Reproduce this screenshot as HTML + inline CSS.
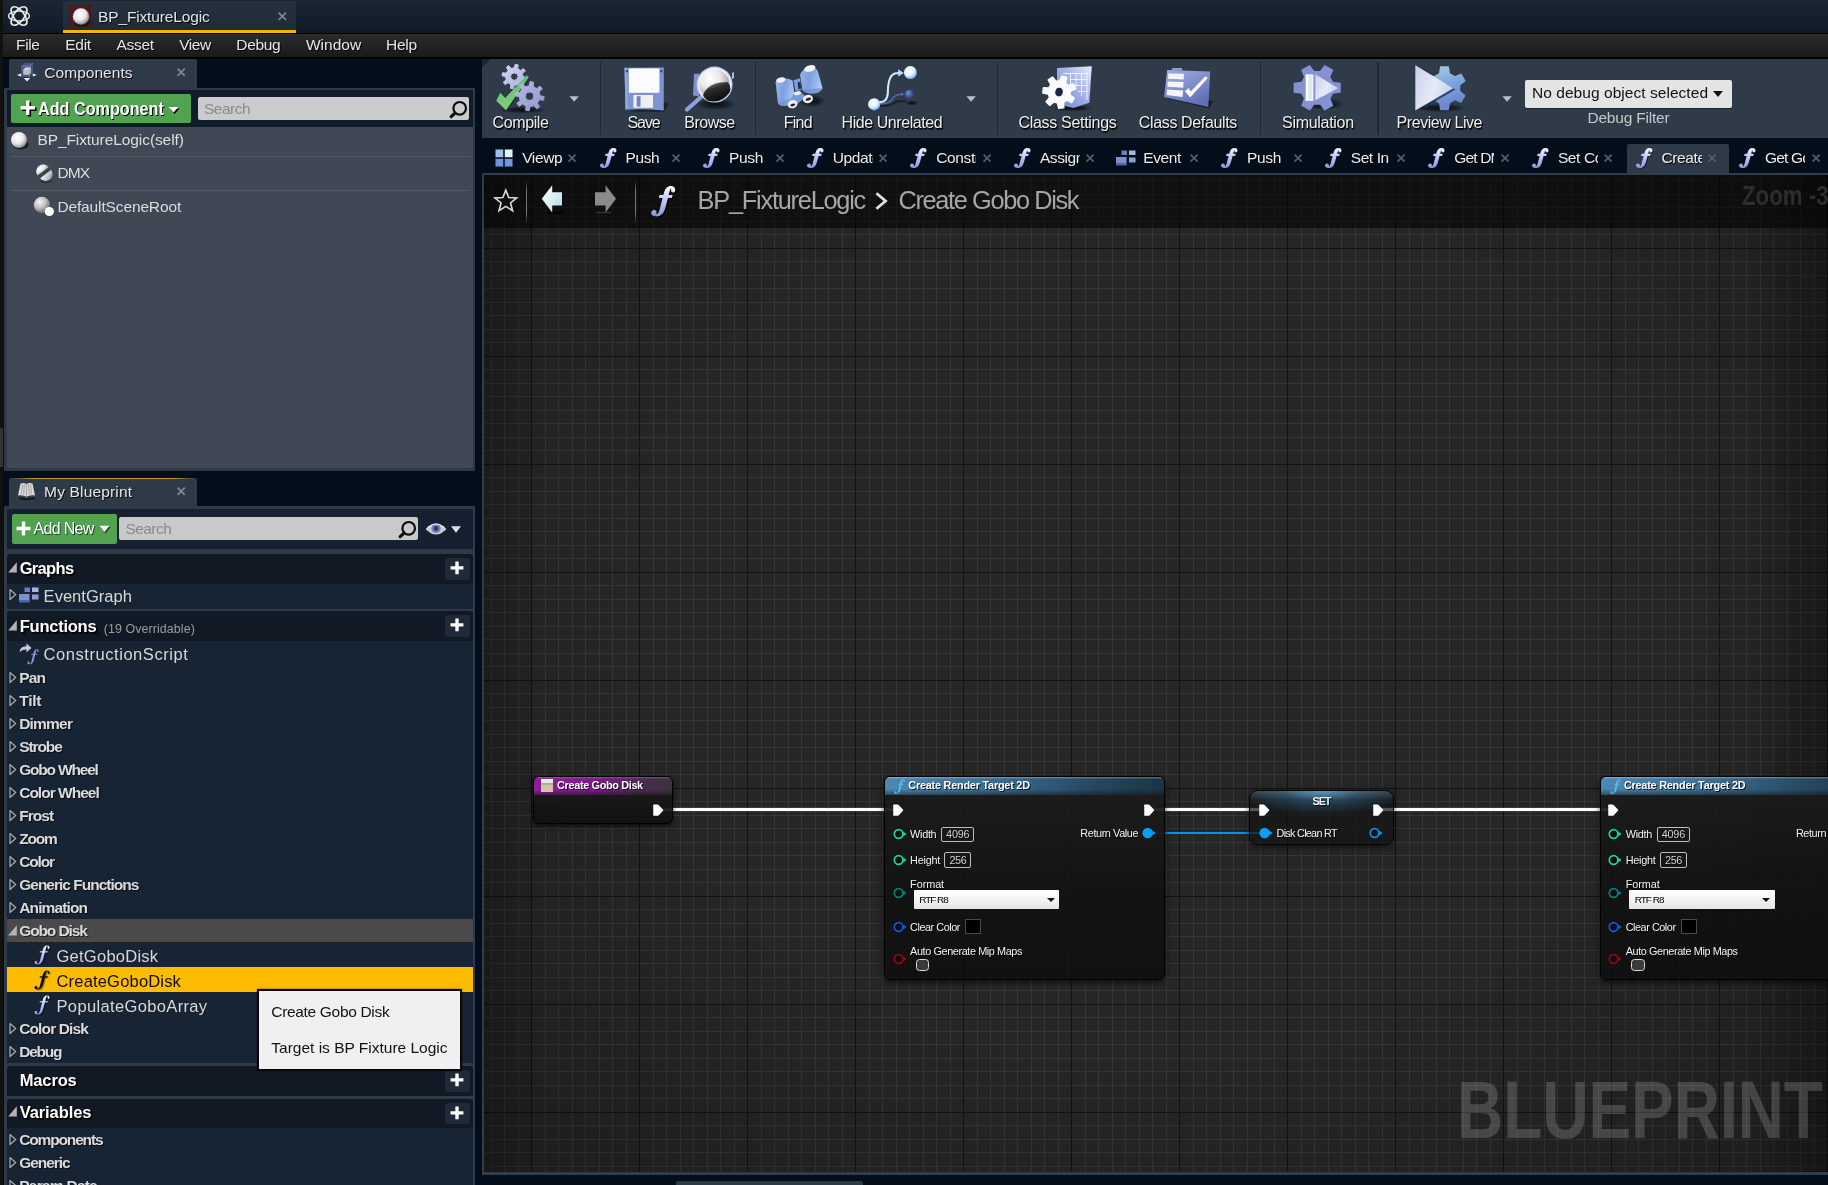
<!DOCTYPE html>
<html><head><meta charset="utf-8"><title>BP_FixtureLogic</title>
<style>
html,body{margin:0;padding:0;}
body{width:1828px;height:1185px;overflow:hidden;position:relative;background:#030e1a;font-family:"Liberation Sans",sans-serif;}
body div,body span,body svg{position:absolute;box-sizing:border-box;}
span{white-space:pre;}
svg{overflow:visible;}
</style></head><body>
<div id="root" style="left:0;top:0;width:1828px;height:1185px;will-change:transform;">
<div style="left:0px;top:0px;width:3px;height:1185px;background:#111;"></div>
<div style="left:0px;top:428px;width:3px;height:39px;background:#333;"></div>
<div style="left:3px;top:0px;width:1825px;height:33px;background:linear-gradient(#1b2632,#111b27);"></div>
<div style="left:63px;top:1px;width:233px;height:32px;background:linear-gradient(#25313d,#1f2b38);border-bottom:3px solid #f7b500;border-radius:2px 2px 0 0;"></div>
<div style="left:3px;top:33px;width:1825px;height:25.5px;background:linear-gradient(#2b2b2b,#1a1a1a);border-top:1px solid #000;border-bottom:2px solid #000;"></div>
<svg width="0" height="0" style="left:0;top:0"><defs><linearGradient id="fgm" gradientUnits="userSpaceOnUse" x1="0" y1="0" x2="0" y2="21"><stop offset="0" stop-color="#ffffff"/><stop offset=".4" stop-color="#c6cffa"/><stop offset="1" stop-color="#8797e2"/></linearGradient></defs></svg>
<svg style="left:6px;top:3px" width="26" height="26" viewBox="0 0 26 26" fill="none" stroke="#e8e8e8" stroke-width="1.7">
<ellipse cx="13" cy="13" rx="5.2" ry="11" transform="rotate(-38 13 13)"/>
<ellipse cx="13" cy="13" rx="5.2" ry="11" transform="rotate(38 13 13)"/>
<ellipse cx="13" cy="13" rx="10.5" ry="5" stroke-width="1.3"/>
</svg>
<div style="left:69px;top:5px;width:23px;height:23px;background:#4a1a1f;"></div>
<svg style="left:69px;top:5px" width="23" height="23" viewBox="0 0 23 23">
<defs><radialGradient id="sph" cx="40%" cy="35%" r="65%"><stop offset="0" stop-color="#fff"/><stop offset=".6" stop-color="#e6e6e6"/><stop offset="1" stop-color="#8a8a8a"/></radialGradient></defs>
<ellipse cx="13" cy="17.5" rx="8" ry="4.5" fill="#1a1a1a"/>
<circle cx="12" cy="11.5" r="8.2" fill="url(#sph)"/></svg>
<span style="left:98.0px;top:6.0px;font-size:15.52px;line-height:22px;color:#e4e4e4;letter-spacing:-0.15px;text-shadow:1px 1px 0 rgba(0,0,0,.85);">BP_FixtureLogic</span>
<svg style="left:277.8px;top:11.9px" width="8.6" height="8.6" viewBox="0 0 8.6 8.6"><path d="M.6 .6L8.0 8.0M8.0 .6L.6 8.0" stroke="#7f8994" stroke-width="1.7" fill="none"/></svg>
<span style="left:16.1px;top:34.0px;font-size:15.52px;line-height:22px;color:#e6e6e6;letter-spacing:-0.43px;text-shadow:1px 1px 0 rgba(0,0,0,.85);">File</span>
<span style="left:65.3px;top:34.0px;font-size:15.52px;line-height:22px;color:#e6e6e6;letter-spacing:-0.31px;text-shadow:1px 1px 0 rgba(0,0,0,.85);">Edit</span>
<span style="left:116.5px;top:34.0px;font-size:15.52px;line-height:22px;color:#e6e6e6;letter-spacing:-0.30px;text-shadow:1px 1px 0 rgba(0,0,0,.85);">Asset</span>
<span style="left:179.2px;top:34.0px;font-size:15.52px;line-height:22px;color:#e6e6e6;letter-spacing:-0.42px;text-shadow:1px 1px 0 rgba(0,0,0,.85);">View</span>
<span style="left:236.3px;top:34.0px;font-size:15.52px;line-height:22px;color:#e6e6e6;letter-spacing:-0.35px;text-shadow:1px 1px 0 rgba(0,0,0,.85);">Debug</span>
<span style="left:305.9px;top:34.0px;font-size:15.52px;line-height:22px;color:#e6e6e6;letter-spacing:0.03px;text-shadow:1px 1px 0 rgba(0,0,0,.85);">Window</span>
<span style="left:386.0px;top:34.0px;font-size:15.52px;line-height:22px;color:#e6e6e6;letter-spacing:-0.23px;text-shadow:1px 1px 0 rgba(0,0,0,.85);">Help</span>
<div style="left:9px;top:59px;width:188px;height:30px;background:#2e3a48;border-radius:2px 2px 0 0;"></div>
<div style="left:4px;top:88px;width:471px;height:383px;background:#2e3a48;"></div>
<div style="left:7px;top:90px;width:466px;height:37px;background:#101c2a;"></div>
<div style="left:7px;top:127px;width:466px;height:341px;background:#3f4854;border-radius:0 0 3px 3px;"></div>
<svg style="left:16px;top:61px" width="22" height="22" viewBox="16 61 22 22">
<path d="M21 66.2 L24.5 63 H33 V73.5 L29.5 77 H21z" fill="#4f6296" opacity=".75"/><path d="M21 66.2 H29.5 V77 M29.5 66.2 L33 63" stroke="#7f93cc" stroke-width=".8" fill="none" opacity=".8"/>
<path d="M23.5 69.5 L25.5 67.6 H30.8 V72.6 L28.8 74.5 H23.5z" fill="#d9d9d9"/><path d="M23.5 69.5 H28.8 V74.5 H23.5z" fill="#bdbdbd"/><path d="M28.8 69.5 L30.8 67.6 V72.6 L28.8 74.5z" fill="#9fb4b8"/>
<path d="M17 75 L21 73.6 V76.4z M36.8 75 L32.8 73.6 V76.4z M23.8 78 H30.2 L27 81.4z" fill="#f2f2f2"/></svg>
<span style="left:44.3px;top:62.0px;font-size:15.52px;line-height:22px;color:#e6e6e6;letter-spacing:0.03px;text-shadow:1px 1px 0 rgba(0,0,0,.85);">Components</span>
<svg style="left:176.8px;top:68.2px" width="8.4" height="8.4" viewBox="0 0 8.4 8.4"><path d="M.6 .6L7.800000000000001 7.800000000000001M7.800000000000001 .6L.6 7.800000000000001" stroke="#7f8994" stroke-width="1.7" fill="none"/></svg>
<div style="left:11px;top:94px;width:180px;height:29px;background:#51a351;border-radius:2px;"></div>
<span style="left:38.0px;top:96.0px;font-size:18.63px;line-height:26px;color:#fff;font-weight:bold;transform:scaleX(0.8697);transform-origin:0 50%;text-shadow:1px 1px 0 #000;">Add Component</span>
<svg style="left:20.4px;top:100.2px" width="16.6" height="16.6" viewBox="0 0 15 15"><path d="M6 1h3v5h5v3H9v5H6V9H1V6h5z" fill="#000" transform="translate(1,1)"/><path d="M5.5 .5h3v5h5v3h-5v5h-3v-5h-5v-3h5z" fill="#fff"/></svg>
<svg style="left:168px;top:106px" width="12" height="8" viewBox="0 0 12 8"><path d="M1.5 2.5h10l-5 5.5z" fill="#000"/><path d="M.5 1h10l-5 5.5z" fill="#fff"/></svg>
<div style="left:198px;top:97px;width:271px;height:23px;background:#cbcbcb;border-radius:2px;"></div>
<span style="left:204.0px;top:98.0px;font-size:15.52px;line-height:22px;color:#8a8a8a;letter-spacing:-0.53px;">Search</span>
<svg style="left:448px;top:99.5px" width="20" height="20" viewBox="0 0 20 20" fill="none" stroke="#0c0c0c"><circle cx="11.7" cy="8.3" r="6.3" stroke-width="2.2"/><path d="M7 13.1L3.2 16.6" stroke-width="3.2" stroke-linecap="round"/></svg>
<svg style="left:10px;top:131px" width="20" height="20" viewBox="0 0 20 20"><ellipse cx="10.5" cy="13.5" rx="8" ry="5" fill="#1c1c1c"/><circle cx="9" cy="9" r="8" fill="url(#sph)"/></svg>
<span style="left:37.4px;top:129.0px;font-size:15.52px;line-height:22px;color:#dcdcdc;letter-spacing:-0.09px;">BP_FixtureLogic(self)</span>
<div style="left:11px;top:156px;width:459px;height:1px;background:#55585c;"></div>
<div style="left:11px;top:190px;width:459px;height:1px;background:#55585c;"></div>
<svg style="left:30px;top:160px" width="26" height="26" viewBox="30 160 26 26">
<defs><linearGradient id="dmxb" x1="0" y1="0" x2="1" y2="1"><stop offset="0" stop-color="#f2f2f2"/><stop offset=".5" stop-color="#c9c9c9"/><stop offset="1" stop-color="#7d7d7d"/></linearGradient>
<radialGradient id="dmxa" cx="40%" cy="35%" r="70%"><stop offset="0" stop-color="#fff"/><stop offset=".7" stop-color="#e4e4e4"/><stop offset="1" stop-color="#b4b4b4"/></radialGradient></defs>
<ellipse cx="46" cy="181.6" rx="6" ry="1.6" fill="#2a2f37" opacity=".8"/>
<path d="M-6.9 0 A6.9 6.9 0 0 1 6.9 0z" transform="translate(43.1,171.4) rotate(-37)" fill="url(#dmxa)"/>
<path d="M-6.6 -.2 L6.6 -.2 L6.2 1.3 L-6 1.3z" transform="translate(43.9,172.5) rotate(-37)" fill="#3a4049"/>
<path d="M-6.9 0 A6.9 6.9 0 0 0 6.9 0z" transform="translate(45.7,174) rotate(-37)" fill="url(#dmxb)"/>
</svg>
<span style="left:57.4px;top:162.0px;font-size:15.52px;line-height:22px;color:#dcdcdc;letter-spacing:-0.86px;">DMX</span>
<svg style="left:33px;top:196px" width="22" height="21" viewBox="0 0 22 21">
<defs><radialGradient id="sph2" cx="35%" cy="30%" r="70%"><stop offset="0" stop-color="#f4f4f4"/><stop offset=".55" stop-color="#bdbdbd"/><stop offset="1" stop-color="#6a6a6a"/></radialGradient></defs>
<circle cx="9" cy="9" r="8.2" fill="url(#sph2)"/><circle cx="16.3" cy="15.5" r="4.6" fill="#fff"/></svg>
<span style="left:57.4px;top:196.0px;font-size:15.52px;line-height:22px;color:#dcdcdc;letter-spacing:-0.14px;">DefaultSceneRoot</span>
<div style="left:9px;top:478px;width:188px;height:29px;background:#2e3a48;border-radius:2px 2px 0 0;"></div>
<div style="left:11px;top:477.6px;width:184px;height:1.4px;background:linear-gradient(90deg,rgba(190,140,40,0),rgba(214,160,50,.9) 12%,rgba(214,160,50,.9) 88%,rgba(190,140,40,0));border-radius:2px;"></div>
<div style="left:4px;top:506px;width:471px;height:680px;background:#2e3a48;"></div>
<div style="left:7px;top:509px;width:466px;height:40px;background:#152130;"></div>
<svg style="left:17px;top:482px" width="19" height="18" viewBox="0 0 19 18">
<path d="M2.5 15.5 L9.5 16.8 L17.5 15.5 L17.5 17 L9.5 18 L2.5 17z" fill="#0a0a0a"/>
<path d="M1 13.5 L3.5 1.5 Q7 .2 9.5 2 Q12 .2 15.5 1.5 L18 13.5 Q13 12.5 9.5 14.8 Q6 12.5 1 13.5z" fill="#d9d9d9"/>
<path d="M9.5 2v12.5M5.5 2.2l-1.2 10M13.5 2.2l1.2 10M7.4 1.8l-.7 11M11.6 1.8l.7 11" stroke="#8c8c8c" stroke-width=".7" fill="none"/></svg>
<span style="left:44.1px;top:481.0px;font-size:15.52px;line-height:22px;color:#e6e6e6;letter-spacing:0.15px;text-shadow:1px 1px 0 rgba(0,0,0,.85);">My Blueprint</span>
<svg style="left:176.8px;top:487.4px" width="8.4" height="8.4" viewBox="0 0 8.4 8.4"><path d="M.6 .6L7.800000000000001 7.800000000000001M7.800000000000001 .6L.6 7.800000000000001" stroke="#7f8994" stroke-width="1.7" fill="none"/></svg>
<div style="left:12px;top:514px;width:105px;height:30px;background:#51a351;border-radius:2px;"></div>
<svg style="left:15.5px;top:521px" width="15" height="16" viewBox="0 0 15 16"><path d="M5.8 .5h3.4v5.3h5.3v3.4h-5.3v5.3h-3.4v-5.3h-5.3v-3.4h5.3z" fill="#fff"/></svg>
<span style="left:33.4px;top:517.0px;font-size:16.04px;line-height:22px;color:#fff;letter-spacing:-0.67px;text-shadow:1px 1px 0 rgba(0,0,0,.6);">Add New</span>
<svg style="left:98.5px;top:525px" width="12" height="9" viewBox="0 0 12 9"><path d="M1.5 2h10l-5 6.5z" fill="#1d3d1d"/><path d="M.5 .8h10l-5 6.2z" fill="#fff"/></svg>
<div style="left:119px;top:517px;width:299px;height:23px;background:#c9c9c9;border-radius:2px;"></div>
<span style="left:125.5px;top:518.0px;font-size:15.52px;line-height:22px;color:#8a8a8a;letter-spacing:-0.58px;">Search</span>
<svg style="left:397px;top:519.5px" width="20" height="20" viewBox="0 0 20 20" fill="none" stroke="#0c0c0c"><circle cx="11.7" cy="8.3" r="6.3" stroke-width="2.2"/><path d="M7 13.1L3.2 16.6" stroke-width="3.2" stroke-linecap="round"/></svg>
<svg style="left:425px;top:522px" width="22" height="14" viewBox="0 0 22 14"><path d="M.5 7 Q11 -4 21.5 7 Q11 18 .5 7z" fill="#c8ccd4"/><circle cx="11" cy="6.5" r="4.6" fill="#6f7fb8"/><circle cx="11" cy="6.5" r="2.2" fill="#2c3558"/><path d="M3 5.5Q11 -1.5 19 5.5" stroke="#eef0f5" stroke-width="1.2" fill="none"/></svg>
<svg style="left:451px;top:525.5px" width="10" height="7" viewBox="0 0 10 7"><path d="M0 .2h10l-5 6.5z" fill="#e0e0e0"/></svg>
<div style="left:7px;top:584px;width:466px;height:25px;background:#172433;"></div>
<div style="left:7px;top:641px;width:466px;height:422px;background:#172433;"></div>
<div style="left:7px;top:1128px;width:466px;height:57px;background:#172433;"></div>
<div style="left:7px;top:554px;width:466px;height:30px;background:#111a24;border-radius:3px 3px 0 0;"></div>
<svg style="left:8px;top:561.6px" width="9" height="11" viewBox="0 0 9 11"><path d="M8.8 .3V10.5H.2z" fill="#b4b4b4"/></svg>
<span style="left:19.7px;top:557.0px;font-size:16.56px;line-height:23px;color:#fff;font-weight:bold;letter-spacing:-0.70px;text-shadow:1px 1px 0 #000, 2px 2px 1px rgba(0,0,0,.7);">Graphs</span>
<div style="left:445px;top:558px;width:25px;height:22px;background:#1f2a36;border-radius:3px;"></div>
<svg style="left:450px;top:561.0px" width="14" height="13.8" viewBox="0 0 14 14"><path d="M5.3 .5h3.4v4.8h4.8v3.4h-4.8v4.8h-3.4v-4.8h-4.8v-3.4h4.8z" fill="#fff"/></svg>
<div style="left:7px;top:611px;width:466px;height:30px;background:#111a24;border-radius:3px 3px 0 0;"></div>
<svg style="left:8px;top:619.8px" width="9" height="11" viewBox="0 0 9 11"><path d="M8.8 .3V10.5H.2z" fill="#b4b4b4"/></svg>
<span style="left:19.7px;top:615.0px;font-size:16.56px;line-height:23px;color:#fff;font-weight:bold;letter-spacing:-0.26px;text-shadow:1px 1px 0 #000, 2px 2px 1px rgba(0,0,0,.7);">Functions</span>
<div style="left:445px;top:615px;width:25px;height:22px;background:#1f2a36;border-radius:3px;"></div>
<svg style="left:450px;top:618.0px" width="14" height="13.8" viewBox="0 0 14 14"><path d="M5.3 .5h3.4v4.8h4.8v3.4h-4.8v4.8h-3.4v-4.8h-4.8v-3.4h4.8z" fill="#fff"/></svg>
<span style="left:103.7px;top:621.0px;font-size:12.42px;line-height:17px;color:#9c9c9c;letter-spacing:0.10px;">(19 Overridable)</span>
<div style="left:7px;top:1066px;width:466px;height:30px;background:#111a24;border-radius:3px 3px 0 0;"></div>
<span style="left:19.7px;top:1069.0px;font-size:16.56px;line-height:23px;color:#fff;font-weight:bold;letter-spacing:-0.16px;text-shadow:1px 1px 0 #000, 2px 2px 1px rgba(0,0,0,.7);">Macros</span>
<div style="left:445px;top:1070px;width:25px;height:22px;background:#1f2a36;border-radius:3px;"></div>
<svg style="left:450px;top:1073.0px" width="14" height="13.8" viewBox="0 0 14 14"><path d="M5.3 .5h3.4v4.8h4.8v3.4h-4.8v4.8h-3.4v-4.8h-4.8v-3.4h4.8z" fill="#fff"/></svg>
<div style="left:7px;top:1099px;width:466px;height:29px;background:#111a24;border-radius:3px 3px 0 0;"></div>
<svg style="left:8px;top:1106.4px" width="9" height="11" viewBox="0 0 9 11"><path d="M8.8 .3V10.5H.2z" fill="#b4b4b4"/></svg>
<span style="left:19.7px;top:1101.0px;font-size:16.56px;line-height:23px;color:#fff;font-weight:bold;letter-spacing:-0.11px;text-shadow:1px 1px 0 #000, 2px 2px 1px rgba(0,0,0,.7);">Variables</span>
<div style="left:445px;top:1103px;width:25px;height:21px;background:#1f2a36;border-radius:3px;"></div>
<svg style="left:450px;top:1105.5px" width="14" height="13.8" viewBox="0 0 14 14"><path d="M5.3 .5h3.4v4.8h4.8v3.4h-4.8v4.8h-3.4v-4.8h-4.8v-3.4h4.8z" fill="#fff"/></svg>
<svg style="left:9px;top:589.0px" width="8" height="11" viewBox="0 0 8 11"><path d="M1 .5L6.7 5.5L1 10.5z" fill="none" stroke="#a8a8a8" stroke-width="1.25" stroke-linejoin="round"/></svg>
<svg style="left:19px;top:587px" width="20" height="16" viewBox="0 0 20 16"><rect x="5.5" y=".5" width="5.5" height="4.5" fill="#6d7fbf"/><rect x="13" y=".5" width="6.5" height="4.5" fill="#a9b6e0"/><rect x="0" y="7" width="10.5" height="8" fill="#7d8fd0"/><rect x="0" y="13" width="10.5" height="2.5" fill="#54649c"/><rect x="13" y="7.5" width="6.5" height="5" fill="#8d9dd6"/></svg>
<span style="left:43.6px;top:585.0px;font-size:16.56px;line-height:23px;color:#d8d8d8;letter-spacing:0.00px;">EventGraph</span>
<svg style="left:19px;top:643px" width="21" height="22" viewBox="0 0 21 22"><path d="M.5 9.5 Q1 3 7.5 3.2 V.5 L12.5 5 L7.5 9.2 V6.5 Q3 6.2 .5 9.5z" fill="#c7cbe0"/></svg>
<svg style="left:27.2px;top:648.5px" width="12" height="15.6" viewBox="0 0 16 21" preserveAspectRatio="none"><path d="M15.6 2.5 C15.6 1.2 14.5 .4 13.1 .4 C10.7 .4 9.5 2.2 8.8 5 L8.4 6.5 H5.9 L5.6 7.9 H8.1 L6 16.4 C5.5 18.4 4.8 19.6 3.7 19.6 C3.2 19.6 3 19.4 3 19.2 C3 18.9 3.3 18.7 3.3 18.1 C3.3 17.4 2.7 16.9 1.9 16.9 C1.1 16.9 .5 17.6 .5 18.5 C.5 19.8 1.8 20.6 3.6 20.6 C6.4 20.6 8.2 18.4 9.1 15 L10.9 7.9 H13.5 L13.8 6.5 H11.2 L11.5 5.3 C12 3.1 12.4 1.4 13.3 1.4 C13.7 1.4 13.8 1.6 13.8 1.8 C13.8 2.1 13.5 2.4 13.5 2.9 C13.5 3.6 14 4.1 14.6 4.1 C15.3 4.1 15.6 3.4 15.6 2.5z" fill="#8595de" stroke="#8595de" stroke-width="0" stroke-linejoin="round"/></svg>
<span style="left:43.6px;top:643.0px;font-size:16.56px;line-height:23px;color:#d8d8d8;letter-spacing:0.53px;">ConstructionScript</span>
<svg style="left:9px;top:671.6px" width="8" height="11" viewBox="0 0 8 11"><path d="M1 .5L6.7 5.5L1 10.5z" fill="none" stroke="#a8a8a8" stroke-width="1.25" stroke-linejoin="round"/></svg>
<span style="left:19.2px;top:667.0px;font-size:15.52px;line-height:22px;color:#dadada;font-weight:bold;letter-spacing:-0.82px;text-shadow:1px 1px 0 rgba(0,0,0,.6);">Pan</span>
<svg style="left:9px;top:694.6px" width="8" height="11" viewBox="0 0 8 11"><path d="M1 .5L6.7 5.5L1 10.5z" fill="none" stroke="#a8a8a8" stroke-width="1.25" stroke-linejoin="round"/></svg>
<span style="left:19.2px;top:690.0px;font-size:15.52px;line-height:22px;color:#dadada;font-weight:bold;letter-spacing:-0.25px;text-shadow:1px 1px 0 rgba(0,0,0,.6);">Tilt</span>
<svg style="left:9px;top:717.6px" width="8" height="11" viewBox="0 0 8 11"><path d="M1 .5L6.7 5.5L1 10.5z" fill="none" stroke="#a8a8a8" stroke-width="1.25" stroke-linejoin="round"/></svg>
<span style="left:19.2px;top:713.0px;font-size:15.52px;line-height:22px;color:#dadada;font-weight:bold;letter-spacing:-0.80px;text-shadow:1px 1px 0 rgba(0,0,0,.6);">Dimmer</span>
<svg style="left:9px;top:740.6px" width="8" height="11" viewBox="0 0 8 11"><path d="M1 .5L6.7 5.5L1 10.5z" fill="none" stroke="#a8a8a8" stroke-width="1.25" stroke-linejoin="round"/></svg>
<span style="left:19.2px;top:736.0px;font-size:15.52px;line-height:22px;color:#dadada;font-weight:bold;letter-spacing:-1.11px;text-shadow:1px 1px 0 rgba(0,0,0,.6);">Strobe</span>
<svg style="left:9px;top:763.6px" width="8" height="11" viewBox="0 0 8 11"><path d="M1 .5L6.7 5.5L1 10.5z" fill="none" stroke="#a8a8a8" stroke-width="1.25" stroke-linejoin="round"/></svg>
<span style="left:19.2px;top:759.0px;font-size:15.52px;line-height:22px;color:#dadada;font-weight:bold;letter-spacing:-1.20px;text-shadow:1px 1px 0 rgba(0,0,0,.6);">Gobo Wheel</span>
<svg style="left:9px;top:786.6px" width="8" height="11" viewBox="0 0 8 11"><path d="M1 .5L6.7 5.5L1 10.5z" fill="none" stroke="#a8a8a8" stroke-width="1.25" stroke-linejoin="round"/></svg>
<span style="left:19.2px;top:782.0px;font-size:15.52px;line-height:22px;color:#dadada;font-weight:bold;letter-spacing:-1.00px;text-shadow:1px 1px 0 rgba(0,0,0,.6);">Color Wheel</span>
<svg style="left:9px;top:809.6px" width="8" height="11" viewBox="0 0 8 11"><path d="M1 .5L6.7 5.5L1 10.5z" fill="none" stroke="#a8a8a8" stroke-width="1.25" stroke-linejoin="round"/></svg>
<span style="left:19.2px;top:805.0px;font-size:15.52px;line-height:22px;color:#dadada;font-weight:bold;letter-spacing:-0.94px;text-shadow:1px 1px 0 rgba(0,0,0,.6);">Frost</span>
<svg style="left:9px;top:832.6px" width="8" height="11" viewBox="0 0 8 11"><path d="M1 .5L6.7 5.5L1 10.5z" fill="none" stroke="#a8a8a8" stroke-width="1.25" stroke-linejoin="round"/></svg>
<span style="left:19.2px;top:828.0px;font-size:15.52px;line-height:22px;color:#dadada;font-weight:bold;letter-spacing:-1.24px;text-shadow:1px 1px 0 rgba(0,0,0,.6);">Zoom</span>
<svg style="left:9px;top:855.6px" width="8" height="11" viewBox="0 0 8 11"><path d="M1 .5L6.7 5.5L1 10.5z" fill="none" stroke="#a8a8a8" stroke-width="1.25" stroke-linejoin="round"/></svg>
<span style="left:19.2px;top:851.0px;font-size:15.52px;line-height:22px;color:#dadada;font-weight:bold;letter-spacing:-1.18px;text-shadow:1px 1px 0 rgba(0,0,0,.6);">Color</span>
<svg style="left:9px;top:878.6px" width="8" height="11" viewBox="0 0 8 11"><path d="M1 .5L6.7 5.5L1 10.5z" fill="none" stroke="#a8a8a8" stroke-width="1.25" stroke-linejoin="round"/></svg>
<span style="left:19.2px;top:874.0px;font-size:15.52px;line-height:22px;color:#dadada;font-weight:bold;letter-spacing:-1.00px;text-shadow:1px 1px 0 rgba(0,0,0,.6);">Generic Functions</span>
<svg style="left:9px;top:901.6px" width="8" height="11" viewBox="0 0 8 11"><path d="M1 .5L6.7 5.5L1 10.5z" fill="none" stroke="#a8a8a8" stroke-width="1.25" stroke-linejoin="round"/></svg>
<span style="left:19.2px;top:897.0px;font-size:15.52px;line-height:22px;color:#dadada;font-weight:bold;letter-spacing:-0.87px;text-shadow:1px 1px 0 rgba(0,0,0,.6);">Animation</span>
<div style="left:7px;top:919px;width:466px;height:23px;background:#4a4a4a;"></div>
<svg style="left:8px;top:924.6px" width="9" height="11" viewBox="0 0 9 11"><path d="M8.8 .3V10.5H.2z" fill="#b4b4b4"/></svg>
<span style="left:19.2px;top:920.0px;font-size:15.52px;line-height:22px;color:#dadada;font-weight:bold;letter-spacing:-1.12px;text-shadow:1px 1px 0 rgba(0,0,0,.6);">Gobo Disk</span>
<svg style="left:33.5px;top:945px" width="16" height="20" viewBox="0 0 16 21" preserveAspectRatio="none"><path d="M15.6 2.5 C15.6 1.2 14.5 .4 13.1 .4 C10.7 .4 9.5 2.2 8.8 5 L8.4 6.5 H5.9 L5.6 7.9 H8.1 L6 16.4 C5.5 18.4 4.8 19.6 3.7 19.6 C3.2 19.6 3 19.4 3 19.2 C3 18.9 3.3 18.7 3.3 18.1 C3.3 17.4 2.7 16.9 1.9 16.9 C1.1 16.9 .5 17.6 .5 18.5 C.5 19.8 1.8 20.6 3.6 20.6 C6.4 20.6 8.2 18.4 9.1 15 L10.9 7.9 H13.5 L13.8 6.5 H11.2 L11.5 5.3 C12 3.1 12.4 1.4 13.3 1.4 C13.7 1.4 13.8 1.6 13.8 1.8 C13.8 2.1 13.5 2.4 13.5 2.9 C13.5 3.6 14 4.1 14.6 4.1 C15.3 4.1 15.6 3.4 15.6 2.5z" fill="#0a101c" transform="translate(1.2,1)"/><path d="M15.6 2.5 C15.6 1.2 14.5 .4 13.1 .4 C10.7 .4 9.5 2.2 8.8 5 L8.4 6.5 H5.9 L5.6 7.9 H8.1 L6 16.4 C5.5 18.4 4.8 19.6 3.7 19.6 C3.2 19.6 3 19.4 3 19.2 C3 18.9 3.3 18.7 3.3 18.1 C3.3 17.4 2.7 16.9 1.9 16.9 C1.1 16.9 .5 17.6 .5 18.5 C.5 19.8 1.8 20.6 3.6 20.6 C6.4 20.6 8.2 18.4 9.1 15 L10.9 7.9 H13.5 L13.8 6.5 H11.2 L11.5 5.3 C12 3.1 12.4 1.4 13.3 1.4 C13.7 1.4 13.8 1.6 13.8 1.8 C13.8 2.1 13.5 2.4 13.5 2.9 C13.5 3.6 14 4.1 14.6 4.1 C15.3 4.1 15.6 3.4 15.6 2.5z" fill="url(#fgm)" stroke="url(#fgm)" stroke-width="0" stroke-linejoin="round"/></svg>
<span style="left:56.5px;top:945.0px;font-size:16.56px;line-height:23px;color:#d8d8d8;letter-spacing:0.23px;">GetGoboDisk</span>
<div style="left:7px;top:967px;width:466px;height:25px;background:#fdbc00;"></div>
<svg style="left:33.5px;top:970px" width="16" height="20" viewBox="0 0 16 21" preserveAspectRatio="none"><path d="M15.6 2.5 C15.6 1.2 14.5 .4 13.1 .4 C10.7 .4 9.5 2.2 8.8 5 L8.4 6.5 H5.9 L5.6 7.9 H8.1 L6 16.4 C5.5 18.4 4.8 19.6 3.7 19.6 C3.2 19.6 3 19.4 3 19.2 C3 18.9 3.3 18.7 3.3 18.1 C3.3 17.4 2.7 16.9 1.9 16.9 C1.1 16.9 .5 17.6 .5 18.5 C.5 19.8 1.8 20.6 3.6 20.6 C6.4 20.6 8.2 18.4 9.1 15 L10.9 7.9 H13.5 L13.8 6.5 H11.2 L11.5 5.3 C12 3.1 12.4 1.4 13.3 1.4 C13.7 1.4 13.8 1.6 13.8 1.8 C13.8 2.1 13.5 2.4 13.5 2.9 C13.5 3.6 14 4.1 14.6 4.1 C15.3 4.1 15.6 3.4 15.6 2.5z" fill="rgba(0,0,0,.3)" transform="translate(1.2,1)"/><path d="M15.6 2.5 C15.6 1.2 14.5 .4 13.1 .4 C10.7 .4 9.5 2.2 8.8 5 L8.4 6.5 H5.9 L5.6 7.9 H8.1 L6 16.4 C5.5 18.4 4.8 19.6 3.7 19.6 C3.2 19.6 3 19.4 3 19.2 C3 18.9 3.3 18.7 3.3 18.1 C3.3 17.4 2.7 16.9 1.9 16.9 C1.1 16.9 .5 17.6 .5 18.5 C.5 19.8 1.8 20.6 3.6 20.6 C6.4 20.6 8.2 18.4 9.1 15 L10.9 7.9 H13.5 L13.8 6.5 H11.2 L11.5 5.3 C12 3.1 12.4 1.4 13.3 1.4 C13.7 1.4 13.8 1.6 13.8 1.8 C13.8 2.1 13.5 2.4 13.5 2.9 C13.5 3.6 14 4.1 14.6 4.1 C15.3 4.1 15.6 3.4 15.6 2.5z" fill="#0a0a0a" stroke="#0a0a0a" stroke-width="0" stroke-linejoin="round"/></svg>
<span style="left:56.5px;top:970.0px;font-size:16.56px;line-height:23px;color:#0a0a0a;letter-spacing:0.16px;">CreateGoboDisk</span>
<svg style="left:33.5px;top:995px" width="16" height="20" viewBox="0 0 16 21" preserveAspectRatio="none"><path d="M15.6 2.5 C15.6 1.2 14.5 .4 13.1 .4 C10.7 .4 9.5 2.2 8.8 5 L8.4 6.5 H5.9 L5.6 7.9 H8.1 L6 16.4 C5.5 18.4 4.8 19.6 3.7 19.6 C3.2 19.6 3 19.4 3 19.2 C3 18.9 3.3 18.7 3.3 18.1 C3.3 17.4 2.7 16.9 1.9 16.9 C1.1 16.9 .5 17.6 .5 18.5 C.5 19.8 1.8 20.6 3.6 20.6 C6.4 20.6 8.2 18.4 9.1 15 L10.9 7.9 H13.5 L13.8 6.5 H11.2 L11.5 5.3 C12 3.1 12.4 1.4 13.3 1.4 C13.7 1.4 13.8 1.6 13.8 1.8 C13.8 2.1 13.5 2.4 13.5 2.9 C13.5 3.6 14 4.1 14.6 4.1 C15.3 4.1 15.6 3.4 15.6 2.5z" fill="#0a101c" transform="translate(1.2,1)"/><path d="M15.6 2.5 C15.6 1.2 14.5 .4 13.1 .4 C10.7 .4 9.5 2.2 8.8 5 L8.4 6.5 H5.9 L5.6 7.9 H8.1 L6 16.4 C5.5 18.4 4.8 19.6 3.7 19.6 C3.2 19.6 3 19.4 3 19.2 C3 18.9 3.3 18.7 3.3 18.1 C3.3 17.4 2.7 16.9 1.9 16.9 C1.1 16.9 .5 17.6 .5 18.5 C.5 19.8 1.8 20.6 3.6 20.6 C6.4 20.6 8.2 18.4 9.1 15 L10.9 7.9 H13.5 L13.8 6.5 H11.2 L11.5 5.3 C12 3.1 12.4 1.4 13.3 1.4 C13.7 1.4 13.8 1.6 13.8 1.8 C13.8 2.1 13.5 2.4 13.5 2.9 C13.5 3.6 14 4.1 14.6 4.1 C15.3 4.1 15.6 3.4 15.6 2.5z" fill="url(#fgm)" stroke="url(#fgm)" stroke-width="0" stroke-linejoin="round"/></svg>
<span style="left:56.5px;top:995.0px;font-size:16.56px;line-height:23px;color:#d8d8d8;letter-spacing:0.33px;">PopulateGoboArray</span>
<svg style="left:9px;top:1022.6px" width="8" height="11" viewBox="0 0 8 11"><path d="M1 .5L6.7 5.5L1 10.5z" fill="none" stroke="#a8a8a8" stroke-width="1.25" stroke-linejoin="round"/></svg>
<span style="left:19.2px;top:1018.0px;font-size:15.52px;line-height:22px;color:#dadada;font-weight:bold;letter-spacing:-0.88px;text-shadow:1px 1px 0 rgba(0,0,0,.6);">Color Disk</span>
<svg style="left:9px;top:1045.5px" width="8" height="11" viewBox="0 0 8 11"><path d="M1 .5L6.7 5.5L1 10.5z" fill="none" stroke="#a8a8a8" stroke-width="1.25" stroke-linejoin="round"/></svg>
<span style="left:19.2px;top:1041.0px;font-size:15.52px;line-height:22px;color:#dadada;font-weight:bold;letter-spacing:-1.26px;text-shadow:1px 1px 0 rgba(0,0,0,.6);">Debug</span>
<svg style="left:9px;top:1133.8px" width="8" height="11" viewBox="0 0 8 11"><path d="M1 .5L6.7 5.5L1 10.5z" fill="none" stroke="#a8a8a8" stroke-width="1.25" stroke-linejoin="round"/></svg>
<span style="left:19.2px;top:1129.0px;font-size:15.52px;line-height:22px;color:#dadada;font-weight:bold;letter-spacing:-1.16px;text-shadow:1px 1px 0 rgba(0,0,0,.6);">Components</span>
<svg style="left:9px;top:1156.7px" width="8" height="11" viewBox="0 0 8 11"><path d="M1 .5L6.7 5.5L1 10.5z" fill="none" stroke="#a8a8a8" stroke-width="1.25" stroke-linejoin="round"/></svg>
<span style="left:19.2px;top:1152.0px;font-size:15.52px;line-height:22px;color:#dadada;font-weight:bold;letter-spacing:-1.06px;text-shadow:1px 1px 0 rgba(0,0,0,.6);">Generic</span>
<svg style="left:9px;top:1179.6px" width="8" height="11" viewBox="0 0 8 11"><path d="M1 .5L6.7 5.5L1 10.5z" fill="none" stroke="#a8a8a8" stroke-width="1.25" stroke-linejoin="round"/></svg>
<span style="left:19.2px;top:1175.0px;font-size:15.52px;line-height:22px;color:#dadada;font-weight:bold;letter-spacing:-0.74px;text-shadow:1px 1px 0 rgba(0,0,0,.6);">Param Data</span>
<div style="left:257.2px;top:989.2px;width:204.8px;height:81.4px;background:#f0f0f0;border:2.3px solid #080808;box-shadow:0 0 2px rgba(0,0,0,.5);"></div>
<span style="left:271.3px;top:1001.0px;font-size:15.52px;line-height:22px;color:#121212;letter-spacing:-0.33px;">Create Gobo Disk</span>
<span style="left:271.3px;top:1037.0px;font-size:15.52px;line-height:22px;color:#121212;letter-spacing:-0.01px;">Target is BP Fixture Logic</span>
<div style="left:482px;top:59px;width:1346px;height:79px;background:#2f3b48;"></div>
<svg style="left:482px;top:59px" width="9" height="9" viewBox="0 0 9 9"><path d="M0 0H8.5L0 8.5z" fill="#1b2430"/></svg>
<div style="left:599.5px;top:62px;width:1.6px;height:73px;background:#23282e;"></div>
<div style="left:754.5px;top:62px;width:1.6px;height:73px;background:#23282e;"></div>
<div style="left:996.5px;top:62px;width:1.6px;height:73px;background:#23282e;"></div>
<div style="left:1259.5px;top:62px;width:1.6px;height:73px;background:#23282e;"></div>
<div style="left:1377.0px;top:62px;width:1.6px;height:73px;background:#23282e;"></div>
<span style="left:492.6px;top:111.0px;font-size:16.04px;line-height:22px;color:#ededed;letter-spacing:-0.43px;text-shadow:1px 1px 0 #000, 1px 2px 1px rgba(0,0,0,.7);">Compile</span>
<span style="left:627.5px;top:111.0px;font-size:16.04px;line-height:22px;color:#ededed;letter-spacing:-1.09px;text-shadow:1px 1px 0 #000, 1px 2px 1px rgba(0,0,0,.7);">Save</span>
<span style="left:684.3px;top:111.0px;font-size:16.04px;line-height:22px;color:#ededed;letter-spacing:-0.51px;text-shadow:1px 1px 0 #000, 1px 2px 1px rgba(0,0,0,.7);">Browse</span>
<span style="left:783.7px;top:111.0px;font-size:16.04px;line-height:22px;color:#ededed;letter-spacing:-0.75px;text-shadow:1px 1px 0 #000, 1px 2px 1px rgba(0,0,0,.7);">Find</span>
<span style="left:841.5px;top:111.0px;font-size:16.04px;line-height:22px;color:#ededed;letter-spacing:-0.44px;text-shadow:1px 1px 0 #000, 1px 2px 1px rgba(0,0,0,.7);">Hide Unrelated</span>
<span style="left:1018.5px;top:111.0px;font-size:16.04px;line-height:22px;color:#ededed;letter-spacing:-0.32px;text-shadow:1px 1px 0 #000, 1px 2px 1px rgba(0,0,0,.7);">Class Settings</span>
<span style="left:1138.8px;top:111.0px;font-size:16.04px;line-height:22px;color:#ededed;letter-spacing:-0.37px;text-shadow:1px 1px 0 #000, 1px 2px 1px rgba(0,0,0,.7);">Class Defaults</span>
<span style="left:1282.0px;top:111.0px;font-size:16.04px;line-height:22px;color:#ededed;letter-spacing:-0.31px;text-shadow:1px 1px 0 #000, 1px 2px 1px rgba(0,0,0,.7);">Simulation</span>
<span style="left:1396.5px;top:111.0px;font-size:16.04px;line-height:22px;color:#ededed;letter-spacing:-0.44px;text-shadow:1px 1px 0 #000, 1px 2px 1px rgba(0,0,0,.7);">Preview Live</span>
<svg style="left:568.8000000000001px;top:96.2px" width="10.3" height="6" viewBox="0 0 11 7"><path d="M0 .3H11L5.5 6.6z" fill="#b9bcc0"/></svg>
<svg style="left:966.0px;top:96.2px" width="10.3" height="6" viewBox="0 0 11 7"><path d="M0 .3H11L5.5 6.6z" fill="#b9bcc0"/></svg>
<svg style="left:1501.7px;top:96.2px" width="10.3" height="6" viewBox="0 0 11 7"><path d="M0 .3H11L5.5 6.6z" fill="#b9bcc0"/></svg>
<svg style="left:482px;top:59px" width="1346" height="79" viewBox="482 59 1346 79">
<defs>
<linearGradient id="gA" x1="0" y1="0" x2="1" y2="1"><stop offset="0" stop-color="#d3d6f4"/><stop offset="1" stop-color="#a9aedd"/></linearGradient>
<linearGradient id="gB" x1="0" y1="0" x2="1" y2="1"><stop offset="0" stop-color="#b4b9e4"/><stop offset="1" stop-color="#9097cc"/></linearGradient>
<linearGradient id="gChk" x1="0" y1="0" x2="0" y2="1"><stop offset="0" stop-color="#63bd6b"/><stop offset="1" stop-color="#7ccf7f"/></linearGradient>
<radialGradient id="shd"><stop offset="0" stop-color="#000" stop-opacity=".75"/><stop offset=".6" stop-color="#000" stop-opacity=".45"/><stop offset="1" stop-color="#000" stop-opacity="0"/></radialGradient>
<radialGradient id="lens" cx="35%" cy="28%" r="75%"><stop offset="0" stop-color="#fff"/><stop offset=".45" stop-color="#e9e9e9"/><stop offset="1" stop-color="#8e8e8e"/></radialGradient>
<radialGradient id="orb" cx="40%" cy="35%" r="65%"><stop offset="0" stop-color="#fff"/><stop offset=".6" stop-color="#e6f1ff"/><stop offset="1" stop-color="#6fa4ea"/></radialGradient>
<radialGradient id="orb2" cx="40%" cy="35%" r="65%"><stop offset="0" stop-color="#6f9a9a"/><stop offset=".5" stop-color="#3f66b0"/><stop offset="1" stop-color="#27407c"/></radialGradient>
<linearGradient id="sheet" x1="0" y1="1" x2="1" y2="0"><stop offset="0" stop-color="#6f80d0"/><stop offset=".6" stop-color="#a9b8ea"/><stop offset="1" stop-color="#e4eefb"/></linearGradient>
<linearGradient id="card" x1="0" y1="0" x2=".6" y2="1"><stop offset="0" stop-color="#a3afe4"/><stop offset="1" stop-color="#6070b4"/></linearGradient>
<linearGradient id="tri" x1="0" y1="0" x2="1" y2=".4"><stop offset="0" stop-color="#c9d0ec"/><stop offset=".6" stop-color="#e6eaf7"/><stop offset="1" stop-color="#c0d8ee"/></linearGradient>
<linearGradient id="pgear" x1="0" y1="0" x2=".3" y2="1"><stop offset="0" stop-color="#a5d3e4"/><stop offset=".5" stop-color="#7fa6dc"/><stop offset="1" stop-color="#6c86d0"/></linearGradient>
<linearGradient id="bino" x1="0" y1="0" x2="1" y2=".3"><stop offset="0" stop-color="#9db9ee"/><stop offset=".5" stop-color="#7f9fde"/><stop offset="1" stop-color="#a6c6f2"/></linearGradient>
</defs>
<ellipse cx="523" cy="110" rx="24" ry="3.2" fill="url(#shd)"/>
<path d="M523.1 76.6 L526.6 77.5 L526.0 80.5 L522.4 80.0 L520.5 82.8 L522.3 85.9 L519.8 87.6 L517.6 84.7 L514.3 85.4 L513.4 88.9 L510.4 88.3 L510.9 84.7 L508.1 82.8 L505.0 84.6 L503.3 82.1 L506.2 79.9 L505.5 76.6 L502.0 75.7 L502.6 72.7 L506.2 73.2 L508.1 70.4 L506.3 67.3 L508.8 65.6 L511.0 68.5 L514.3 67.8 L515.2 64.3 L518.2 64.9 L517.7 68.5 L520.5 70.4 L523.6 68.6 L525.3 71.1 L522.4 73.3z M510.6 76.6a3.7 3.7 0 1 0 7.4 0a3.7 3.7 0 1 0 -7.4 0z" fill="url(#gA)" fill-rule="evenodd" stroke="url(#gA)" stroke-width="1" stroke-linejoin="round"/>
<path d="M497.3 101.6 L501.3 93.6 L506.2 98.9 L527.8 76.1 L530 78 L507 111z" fill="#1c2630" opacity=".8"/>
<path d="M496.3 100.8 L500.3 92.8 L505.2 98.1 L526.8 75.3 L529 77.2 L506 110.2z" fill="url(#gChk)"/>
<path d="M540.0 95.7 L544.2 96.6 L543.6 100.2 L539.4 99.7 L537.3 103.2 L539.7 106.8 L536.7 108.9 L534.0 105.6 L530.1 106.6 L529.2 110.8 L525.6 110.2 L526.1 106.0 L522.6 103.9 L519.0 106.3 L516.9 103.3 L520.2 100.6 L519.2 96.7 L515.0 95.8 L515.6 92.2 L519.8 92.7 L521.9 89.2 L519.5 85.6 L522.5 83.5 L525.2 86.8 L529.1 85.8 L530.0 81.6 L533.6 82.2 L533.1 86.4 L536.6 88.5 L540.2 86.1 L542.3 89.1 L539.0 91.8z M525.5 96.2a4.1 4.1 0 1 0 8.2 0a4.1 4.1 0 1 0 -8.2 0z" fill="url(#gB)" fill-rule="evenodd" stroke="url(#gB)" stroke-width="1" stroke-linejoin="round"/>
<path d="M630 111.4 L664 111.8 L668.5 104 L664 102z" fill="#10161c" opacity=".7"/>
<path d="M624.5 67.8 L663.8 67.4 L663.8 110.6 Q644 108.6 625.5 109.6z" fill="#7e92d4"/>
<path d="M624.5 67.8 L627 67.8 L628 109.4 L625.5 109.6z" fill="#94a6e2"/>
<rect x="628.8" y="68.4" width="30.6" height="24.4" fill="#fbfbfb"/>
<rect x="633.4" y="95" width="19.6" height="12.8" fill="#efefef"/><rect x="636.7" y="96.2" width="3.8" height="10.4" fill="#6d82c8"/>
<rect x="625.8" y="70.3" width="2" height="2" fill="#2f3b5e"/><rect x="660.3" y="70.3" width="2" height="2" fill="#2f3b5e"/>
<ellipse cx="716" cy="104" rx="20" ry="6" fill="url(#shd)"/>
<path d="M694 74 L699 73.5 L699 96.5 L693 95.5z" fill="#7f91d2"/>
<path d="M732 73l2 -1 0 6 -2 1z" fill="#aebcea"/>
<path d="M700.5 97.5 L687 109.5" stroke="#8fa0dc" stroke-width="4.2" stroke-linecap="round"/>
<circle cx="714.6" cy="84.6" r="18" fill="#c3ccf2"/><circle cx="714.6" cy="84.6" r="16.6" fill="#f4f6ff"/><circle cx="714.6" cy="84.6" r="15.2" fill="url(#lens)"/>
<defs><linearGradient id="lensd" x1=".2" y1="0" x2=".7" y2="1"><stop offset="0" stop-color="#8a8a8a"/><stop offset=".35" stop-color="#2e2e2e"/><stop offset="1" stop-color="#050505"/></linearGradient></defs>
<path d="M703 95 Q708 82 727.5 82 Q732 87 729.5 92.5 Q722 103.5 709 101 Q704.5 99 703 95z" fill="url(#lensd)"/>
<ellipse cx="812" cy="101" rx="13" ry="6" fill="url(#shd)"/>
<path d="M775.6 82.6 Q776 79 780.5 78 Q788 77.6 792.6 80.6 L795 98.4 Q792 105.5 785 106 Q780 106 778 103.4z" fill="url(#bino)"/>
<path d="M778 103.4 Q784 99.5 795 98.4 Q792 105.5 785 106 Q780 106 778 103.4z" fill="#6f8fd2" opacity=".7"/>
<ellipse cx="780.8" cy="80" rx="4.6" ry="2.5" fill="#f2f4f8" transform="rotate(-14 780.8 80)"/>
<path d="M793.4 80.2 L800 78.2 L801.6 90 L795.4 91z" fill="#7f9de0"/>
<path d="M797.6 82.5 L800.4 81.8 L801.3 88.6 L798.4 89.2z" fill="#27323e"/>
<path d="M800 74.4 Q803 68.6 809 66.2 Q815 66 817.8 71 L822.6 88.4 Q819 93.6 811.6 93.6 Q805.5 93.4 802.6 90.6z" fill="url(#bino)"/>
<path d="M802.6 90.6 Q810 88 822.6 88.4 Q819 93.6 811.6 93.6 Q805.5 93.4 802.6 90.6z" fill="#6f8fd2" opacity=".7"/>
<ellipse cx="809.8" cy="68.4" rx="5.8" ry="3.1" fill="#f4f6fa" transform="rotate(-16 809.8 68.4)"/>
<path d="M794 93 L801 92 L806 97 L797 104 L790 100z" fill="#7a99dc"/>
<ellipse cx="797.4" cy="93.2" rx="3.6" ry="2" fill="#e6eaf2" transform="rotate(-12 797.4 93.2)"/>
<ellipse cx="792.6" cy="104.2" rx="4.9" ry="4.1" fill="#eef0f4" transform="rotate(-15 792.6 104.2)"/><ellipse cx="792.8" cy="104.9" rx="2.6" ry="1.3" fill="#1f2638" transform="rotate(-15 792.8 104.9)"/>
<ellipse cx="807.9" cy="99" rx="5.1" ry="4.2" fill="#eef0f4" transform="rotate(-15 807.9 99)"/><ellipse cx="808.3" cy="99.2" rx="2.8" ry="1.4" fill="#1f2638" transform="rotate(-15 808.3 99.2)"/>
<ellipse cx="912" cy="103" rx="6" ry="2.6" fill="url(#shd)"/><path d="M880 106 Q890 106 894 103 T906 101.5" stroke="#0e141c" stroke-width="2" fill="none" opacity=".7"/>
<path d="M880 103.5 Q890 104 892.5 98.5 Q895 94 903 94.2" stroke="#4a6db4" stroke-width="1.6" fill="none"/><path d="M901 92.2l3.6 2-3.6 2z" fill="#4a6db4"/>
<circle cx="909.3" cy="94.3" r="4.5" fill="url(#orb2)"/>
<path d="M879 102 Q887 103 887.8 93 Q888 74 896 73.2 L901 73" stroke="#d4ebff" stroke-width="2.1" fill="none" stroke-linecap="round"/><path d="M898.2 69.3l5.6 3.6-5.6 3.6z" fill="#b8dcfb"/>
<circle cx="910.4" cy="72.6" r="6.5" fill="url(#orb)"/><circle cx="874.2" cy="104.3" r="6.1" fill="url(#orb)"/>
<ellipse cx="1072" cy="108" rx="20" ry="3.5" fill="url(#shd)"/>
<path d="M1057 68 L1091.8 66.3 L1089.3 102.7 L1073.5 108 L1057 104z" fill="url(#sheet)"/>
<path d="M1063 73.5H1087M1070 79.5H1087M1074 85.5H1087M1078 91.5H1087M1087 72V100M1081.5 73V96M1076 73V90M1070.5 73V84" stroke="#f3f7ff" stroke-width="1" fill="none" opacity=".9"/>
<path d="M1068.3 85.4 L1073.5 84.0 L1075.3 88.9 L1070.4 91.2 L1070.0 95.0 L1074.4 98.2 L1071.6 102.7 L1066.8 100.2 L1063.6 102.3 L1063.8 107.7 L1058.6 108.4 L1057.5 103.1 L1053.9 101.9 L1049.8 105.4 L1046.0 101.8 L1049.5 97.6 L1048.2 94.0 L1042.8 93.0 L1043.4 87.8 L1048.8 87.9 L1050.8 84.6 L1048.2 79.8 L1052.6 77.0 L1055.9 81.3 L1059.7 80.8 L1061.8 75.8 L1066.8 77.5 L1065.5 82.8z M1054.9 92.0a4.3 4.3 0 1 0 8.6 0a4.3 4.3 0 1 0 -8.6 0z" fill="#fafbff" fill-rule="evenodd" stroke="#fafbff" stroke-width="1.4" stroke-linejoin="round"/>
<ellipse cx="1059" cy="92" rx="3.6" ry="4.3" fill="#1c2440" transform="rotate(15 1059 92)"/>
<path d="M1166 98 L1209 108.5 L1213 101 L1170 95z" fill="#0c1016" opacity=".7"/>
<path d="M1172.4 68 h9.4 l.8 2.5 h-11z" fill="#8f9ddb"/>
<path d="M1167.2 70 L1210.3 71.5 L1208.3 106.9 L1164.1 97z" fill="url(#card)"/>
<path d="M1168.4 73.6 L1184 73.8 L1183.6 79.4 L1168 78.8z M1167.8 81.4 L1183.5 82 L1183.2 87.8 L1167.4 86.8z M1167.2 89.4 L1183 90.4 L1182.6 97 L1166.6 95z" fill="#f4f5f9"/>
<path d="M1184.9 91.3 L1188.6 87.9 L1190.6 91.4 L1205.6 76.2 L1207.8 78 L1190.2 97.6z" fill="#fafafa"/>
<ellipse cx="1324" cy="104" rx="20" ry="6" fill="url(#shd)"/>
<path d="M1332.7 82.6 L1340.0 83.5 L1340.0 92.1 L1332.7 93.0 L1329.5 98.6 L1332.4 105.4 L1324.8 109.7 L1320.4 103.9 L1314.0 103.9 L1309.6 109.7 L1302.0 105.4 L1304.9 98.6 L1301.7 93.0 L1294.4 92.1 L1294.4 83.5 L1301.7 82.6 L1304.9 77.0 L1302.0 70.2 L1309.6 65.9 L1314.0 71.7 L1320.4 71.7 L1324.8 65.9 L1332.4 70.2 L1329.5 77.0z" fill="#8492d4" stroke="#8492d4" stroke-width="1.5" stroke-linejoin="round"/>
<rect x="1305.8" y="74.4" width="7.6" height="26.4" fill="#f0f4f8"/><rect x="1305.8" y="74.4" width="2" height="26.4" fill="#fff"/><rect x="1308.5" y="76" width="3.5" height="23" fill="#dfe8ee"/>
<path d="M1315.3 74.2 L1338.2 88.3 L1315.3 100.3z" fill="url(#tri)"/>
<ellipse cx="1440" cy="108" rx="26" ry="4" fill="url(#shd)"/>
<path d="M1449.3 102.8 L1448.3 109.5 L1440.7 109.5 L1439.7 102.8 L1434.2 99.6 L1428.0 102.1 L1424.2 95.5 L1429.4 91.4 L1429.4 85.0 L1424.2 80.9 L1428.0 74.3 L1434.2 76.8 L1439.7 73.6 L1440.7 66.9 L1448.3 66.9 L1449.3 73.6 L1454.8 76.8 L1461.0 74.3 L1464.8 80.9 L1459.6 85.0 L1459.6 91.4 L1464.8 95.5 L1461.0 102.1 L1454.8 99.6z" fill="url(#pgear)" stroke="url(#pgear)" stroke-width="1.4" stroke-linejoin="round"/>
<path d="M1424 108 L1455.5 89.6 L1446 84 L1430 92z" fill="#1f3658" opacity=".8"/>
<path d="M1415.3 65.2 L1453.3 88.2 L1415.3 110.6z" fill="url(#tri)"/>
</svg>
<div style="left:1525px;top:80px;width:207px;height:28px;background:#e4e4e4;border-radius:2px;box-shadow:0 1px 0 rgba(0,0,0,.4);"></div>
<span style="left:1532.0px;top:82.0px;font-size:15.52px;line-height:22px;color:#111;letter-spacing:0.04px;">No debug object selected</span>
<svg style="left:1712.5px;top:90.5px" width="10" height="6" viewBox="0 0 10 6"><path d="M0 0H10L5 6z" fill="#111"/></svg>
<span style="left:1587.4px;top:107.0px;font-size:15.52px;line-height:22px;color:#c6c9cc;letter-spacing:-0.20px;">Debug Filter</span>
<div style="left:1626.5px;top:144px;width:102.5px;height:29px;background:#2e3a48;border-radius:2px 2px 0 0;"></div>
<svg style="left:494.5px;top:148.5px" width="18" height="18" viewBox="0 0 18 18"><defs><linearGradient id="vpg" x1="0" y1="0" x2="1" y2="1"><stop offset="0" stop-color="#7f9ad8"/><stop offset=".5" stop-color="#d6ecf6"/><stop offset="1" stop-color="#5f86d6"/></linearGradient></defs><rect width="18" height="18" fill="#0b1422"/><rect x=".5" y=".5" width="7.7" height="7.7" fill="#9fc0e6"/><rect x="9.8" y=".5" width="7.7" height="7.7" fill="#e4f3f4"/><rect x=".5" y="9.8" width="7.7" height="7.7" fill="#6f92dc"/><rect x="9.8" y="9.8" width="7.7" height="7.7" fill="#6f96e0"/></svg>
<div style="left:522.2px;top:146px;width:40px;height:24px;overflow:hidden;">
<span style="left:0.0px;top:1.0px;font-size:15.52px;line-height:22px;color:#ececec;text-shadow:1px 1px 0 rgba(0,0,0,.85);letter-spacing:-.4px;">Viewpo</span>
</div>
<svg style="left:568.3px;top:154.0px" width="8.2" height="8.2" viewBox="0 0 8.2 8.2"><path d="M.6 .6L7.6 7.6M7.6 .6L.6 7.6" stroke="#4f5d6c" stroke-width="1.8" fill="none"/></svg>
<svg style="left:599.5px;top:148px" width="16.4" height="20" viewBox="0 0 16 21" preserveAspectRatio="none"><path d="M15.6 2.5 C15.6 1.2 14.5 .4 13.1 .4 C10.7 .4 9.5 2.2 8.8 5 L8.4 6.5 H5.9 L5.6 7.9 H8.1 L6 16.4 C5.5 18.4 4.8 19.6 3.7 19.6 C3.2 19.6 3 19.4 3 19.2 C3 18.9 3.3 18.7 3.3 18.1 C3.3 17.4 2.7 16.9 1.9 16.9 C1.1 16.9 .5 17.6 .5 18.5 C.5 19.8 1.8 20.6 3.6 20.6 C6.4 20.6 8.2 18.4 9.1 15 L10.9 7.9 H13.5 L13.8 6.5 H11.2 L11.5 5.3 C12 3.1 12.4 1.4 13.3 1.4 C13.7 1.4 13.8 1.6 13.8 1.8 C13.8 2.1 13.5 2.4 13.5 2.9 C13.5 3.6 14 4.1 14.6 4.1 C15.3 4.1 15.6 3.4 15.6 2.5z" fill="#0a1020" transform="translate(1.2,1)"/><path d="M15.6 2.5 C15.6 1.2 14.5 .4 13.1 .4 C10.7 .4 9.5 2.2 8.8 5 L8.4 6.5 H5.9 L5.6 7.9 H8.1 L6 16.4 C5.5 18.4 4.8 19.6 3.7 19.6 C3.2 19.6 3 19.4 3 19.2 C3 18.9 3.3 18.7 3.3 18.1 C3.3 17.4 2.7 16.9 1.9 16.9 C1.1 16.9 .5 17.6 .5 18.5 C.5 19.8 1.8 20.6 3.6 20.6 C6.4 20.6 8.2 18.4 9.1 15 L10.9 7.9 H13.5 L13.8 6.5 H11.2 L11.5 5.3 C12 3.1 12.4 1.4 13.3 1.4 C13.7 1.4 13.8 1.6 13.8 1.8 C13.8 2.1 13.5 2.4 13.5 2.9 C13.5 3.6 14 4.1 14.6 4.1 C15.3 4.1 15.6 3.4 15.6 2.5z" fill="url(#fgm)" stroke="url(#fgm)" stroke-width="1.0" stroke-linejoin="round"/></svg>
<div style="left:625.5px;top:146px;width:40px;height:24px;overflow:hidden;">
<span style="left:0.0px;top:1.0px;font-size:15.52px;line-height:22px;color:#ececec;text-shadow:1px 1px 0 rgba(0,0,0,.85);letter-spacing:-.4px;">Push </span>
</div>
<svg style="left:671.9px;top:154.0px" width="8.2" height="8.2" viewBox="0 0 8.2 8.2"><path d="M.6 .6L7.6 7.6M7.6 .6L.6 7.6" stroke="#4f5d6c" stroke-width="1.8" fill="none"/></svg>
<svg style="left:703.1px;top:148px" width="16.4" height="20" viewBox="0 0 16 21" preserveAspectRatio="none"><path d="M15.6 2.5 C15.6 1.2 14.5 .4 13.1 .4 C10.7 .4 9.5 2.2 8.8 5 L8.4 6.5 H5.9 L5.6 7.9 H8.1 L6 16.4 C5.5 18.4 4.8 19.6 3.7 19.6 C3.2 19.6 3 19.4 3 19.2 C3 18.9 3.3 18.7 3.3 18.1 C3.3 17.4 2.7 16.9 1.9 16.9 C1.1 16.9 .5 17.6 .5 18.5 C.5 19.8 1.8 20.6 3.6 20.6 C6.4 20.6 8.2 18.4 9.1 15 L10.9 7.9 H13.5 L13.8 6.5 H11.2 L11.5 5.3 C12 3.1 12.4 1.4 13.3 1.4 C13.7 1.4 13.8 1.6 13.8 1.8 C13.8 2.1 13.5 2.4 13.5 2.9 C13.5 3.6 14 4.1 14.6 4.1 C15.3 4.1 15.6 3.4 15.6 2.5z" fill="#0a1020" transform="translate(1.2,1)"/><path d="M15.6 2.5 C15.6 1.2 14.5 .4 13.1 .4 C10.7 .4 9.5 2.2 8.8 5 L8.4 6.5 H5.9 L5.6 7.9 H8.1 L6 16.4 C5.5 18.4 4.8 19.6 3.7 19.6 C3.2 19.6 3 19.4 3 19.2 C3 18.9 3.3 18.7 3.3 18.1 C3.3 17.4 2.7 16.9 1.9 16.9 C1.1 16.9 .5 17.6 .5 18.5 C.5 19.8 1.8 20.6 3.6 20.6 C6.4 20.6 8.2 18.4 9.1 15 L10.9 7.9 H13.5 L13.8 6.5 H11.2 L11.5 5.3 C12 3.1 12.4 1.4 13.3 1.4 C13.7 1.4 13.8 1.6 13.8 1.8 C13.8 2.1 13.5 2.4 13.5 2.9 C13.5 3.6 14 4.1 14.6 4.1 C15.3 4.1 15.6 3.4 15.6 2.5z" fill="url(#fgm)" stroke="url(#fgm)" stroke-width="1.0" stroke-linejoin="round"/></svg>
<div style="left:729.1px;top:146px;width:40px;height:24px;overflow:hidden;">
<span style="left:0.0px;top:1.0px;font-size:15.52px;line-height:22px;color:#ececec;text-shadow:1px 1px 0 rgba(0,0,0,.85);letter-spacing:-.4px;">Push </span>
</div>
<svg style="left:775.5px;top:154.0px" width="8.2" height="8.2" viewBox="0 0 8.2 8.2"><path d="M.6 .6L7.6 7.6M7.6 .6L.6 7.6" stroke="#4f5d6c" stroke-width="1.8" fill="none"/></svg>
<svg style="left:806.7px;top:148px" width="16.4" height="20" viewBox="0 0 16 21" preserveAspectRatio="none"><path d="M15.6 2.5 C15.6 1.2 14.5 .4 13.1 .4 C10.7 .4 9.5 2.2 8.8 5 L8.4 6.5 H5.9 L5.6 7.9 H8.1 L6 16.4 C5.5 18.4 4.8 19.6 3.7 19.6 C3.2 19.6 3 19.4 3 19.2 C3 18.9 3.3 18.7 3.3 18.1 C3.3 17.4 2.7 16.9 1.9 16.9 C1.1 16.9 .5 17.6 .5 18.5 C.5 19.8 1.8 20.6 3.6 20.6 C6.4 20.6 8.2 18.4 9.1 15 L10.9 7.9 H13.5 L13.8 6.5 H11.2 L11.5 5.3 C12 3.1 12.4 1.4 13.3 1.4 C13.7 1.4 13.8 1.6 13.8 1.8 C13.8 2.1 13.5 2.4 13.5 2.9 C13.5 3.6 14 4.1 14.6 4.1 C15.3 4.1 15.6 3.4 15.6 2.5z" fill="#0a1020" transform="translate(1.2,1)"/><path d="M15.6 2.5 C15.6 1.2 14.5 .4 13.1 .4 C10.7 .4 9.5 2.2 8.8 5 L8.4 6.5 H5.9 L5.6 7.9 H8.1 L6 16.4 C5.5 18.4 4.8 19.6 3.7 19.6 C3.2 19.6 3 19.4 3 19.2 C3 18.9 3.3 18.7 3.3 18.1 C3.3 17.4 2.7 16.9 1.9 16.9 C1.1 16.9 .5 17.6 .5 18.5 C.5 19.8 1.8 20.6 3.6 20.6 C6.4 20.6 8.2 18.4 9.1 15 L10.9 7.9 H13.5 L13.8 6.5 H11.2 L11.5 5.3 C12 3.1 12.4 1.4 13.3 1.4 C13.7 1.4 13.8 1.6 13.8 1.8 C13.8 2.1 13.5 2.4 13.5 2.9 C13.5 3.6 14 4.1 14.6 4.1 C15.3 4.1 15.6 3.4 15.6 2.5z" fill="url(#fgm)" stroke="url(#fgm)" stroke-width="1.0" stroke-linejoin="round"/></svg>
<div style="left:832.7px;top:146px;width:40px;height:24px;overflow:hidden;">
<span style="left:0.0px;top:1.0px;font-size:15.52px;line-height:22px;color:#ececec;text-shadow:1px 1px 0 rgba(0,0,0,.85);letter-spacing:-.4px;">Update</span>
</div>
<svg style="left:879.1px;top:154.0px" width="8.2" height="8.2" viewBox="0 0 8.2 8.2"><path d="M.6 .6L7.6 7.6M7.6 .6L.6 7.6" stroke="#4f5d6c" stroke-width="1.8" fill="none"/></svg>
<svg style="left:910.3px;top:148px" width="16.4" height="20" viewBox="0 0 16 21" preserveAspectRatio="none"><path d="M15.6 2.5 C15.6 1.2 14.5 .4 13.1 .4 C10.7 .4 9.5 2.2 8.8 5 L8.4 6.5 H5.9 L5.6 7.9 H8.1 L6 16.4 C5.5 18.4 4.8 19.6 3.7 19.6 C3.2 19.6 3 19.4 3 19.2 C3 18.9 3.3 18.7 3.3 18.1 C3.3 17.4 2.7 16.9 1.9 16.9 C1.1 16.9 .5 17.6 .5 18.5 C.5 19.8 1.8 20.6 3.6 20.6 C6.4 20.6 8.2 18.4 9.1 15 L10.9 7.9 H13.5 L13.8 6.5 H11.2 L11.5 5.3 C12 3.1 12.4 1.4 13.3 1.4 C13.7 1.4 13.8 1.6 13.8 1.8 C13.8 2.1 13.5 2.4 13.5 2.9 C13.5 3.6 14 4.1 14.6 4.1 C15.3 4.1 15.6 3.4 15.6 2.5z" fill="#0a1020" transform="translate(1.2,1)"/><path d="M15.6 2.5 C15.6 1.2 14.5 .4 13.1 .4 C10.7 .4 9.5 2.2 8.8 5 L8.4 6.5 H5.9 L5.6 7.9 H8.1 L6 16.4 C5.5 18.4 4.8 19.6 3.7 19.6 C3.2 19.6 3 19.4 3 19.2 C3 18.9 3.3 18.7 3.3 18.1 C3.3 17.4 2.7 16.9 1.9 16.9 C1.1 16.9 .5 17.6 .5 18.5 C.5 19.8 1.8 20.6 3.6 20.6 C6.4 20.6 8.2 18.4 9.1 15 L10.9 7.9 H13.5 L13.8 6.5 H11.2 L11.5 5.3 C12 3.1 12.4 1.4 13.3 1.4 C13.7 1.4 13.8 1.6 13.8 1.8 C13.8 2.1 13.5 2.4 13.5 2.9 C13.5 3.6 14 4.1 14.6 4.1 C15.3 4.1 15.6 3.4 15.6 2.5z" fill="url(#fgm)" stroke="url(#fgm)" stroke-width="1.0" stroke-linejoin="round"/></svg>
<div style="left:936.3px;top:146px;width:40px;height:24px;overflow:hidden;">
<span style="left:0.0px;top:1.0px;font-size:15.52px;line-height:22px;color:#ececec;text-shadow:1px 1px 0 rgba(0,0,0,.85);letter-spacing:-.4px;">Constr</span>
</div>
<svg style="left:982.7px;top:154.0px" width="8.2" height="8.2" viewBox="0 0 8.2 8.2"><path d="M.6 .6L7.6 7.6M7.6 .6L.6 7.6" stroke="#4f5d6c" stroke-width="1.8" fill="none"/></svg>
<svg style="left:1013.9px;top:148px" width="16.4" height="20" viewBox="0 0 16 21" preserveAspectRatio="none"><path d="M15.6 2.5 C15.6 1.2 14.5 .4 13.1 .4 C10.7 .4 9.5 2.2 8.8 5 L8.4 6.5 H5.9 L5.6 7.9 H8.1 L6 16.4 C5.5 18.4 4.8 19.6 3.7 19.6 C3.2 19.6 3 19.4 3 19.2 C3 18.9 3.3 18.7 3.3 18.1 C3.3 17.4 2.7 16.9 1.9 16.9 C1.1 16.9 .5 17.6 .5 18.5 C.5 19.8 1.8 20.6 3.6 20.6 C6.4 20.6 8.2 18.4 9.1 15 L10.9 7.9 H13.5 L13.8 6.5 H11.2 L11.5 5.3 C12 3.1 12.4 1.4 13.3 1.4 C13.7 1.4 13.8 1.6 13.8 1.8 C13.8 2.1 13.5 2.4 13.5 2.9 C13.5 3.6 14 4.1 14.6 4.1 C15.3 4.1 15.6 3.4 15.6 2.5z" fill="#0a1020" transform="translate(1.2,1)"/><path d="M15.6 2.5 C15.6 1.2 14.5 .4 13.1 .4 C10.7 .4 9.5 2.2 8.8 5 L8.4 6.5 H5.9 L5.6 7.9 H8.1 L6 16.4 C5.5 18.4 4.8 19.6 3.7 19.6 C3.2 19.6 3 19.4 3 19.2 C3 18.9 3.3 18.7 3.3 18.1 C3.3 17.4 2.7 16.9 1.9 16.9 C1.1 16.9 .5 17.6 .5 18.5 C.5 19.8 1.8 20.6 3.6 20.6 C6.4 20.6 8.2 18.4 9.1 15 L10.9 7.9 H13.5 L13.8 6.5 H11.2 L11.5 5.3 C12 3.1 12.4 1.4 13.3 1.4 C13.7 1.4 13.8 1.6 13.8 1.8 C13.8 2.1 13.5 2.4 13.5 2.9 C13.5 3.6 14 4.1 14.6 4.1 C15.3 4.1 15.6 3.4 15.6 2.5z" fill="url(#fgm)" stroke="url(#fgm)" stroke-width="1.0" stroke-linejoin="round"/></svg>
<div style="left:1039.9px;top:146px;width:40px;height:24px;overflow:hidden;">
<span style="left:0.0px;top:1.0px;font-size:15.52px;line-height:22px;color:#ececec;text-shadow:1px 1px 0 rgba(0,0,0,.85);letter-spacing:-.4px;">Assign</span>
</div>
<svg style="left:1086.3px;top:154.0px" width="8.2" height="8.2" viewBox="0 0 8.2 8.2"><path d="M.6 .6L7.6 7.6M7.6 .6L.6 7.6" stroke="#4f5d6c" stroke-width="1.8" fill="none"/></svg>
<svg style="left:1116px;top:150px" width="20" height="16" viewBox="0 0 20 16"><rect x="5.5" y=".5" width="5.5" height="4.5" fill="#6d7fbf"/><rect x="13" y=".5" width="6.5" height="4.5" fill="#a9b6e0"/><rect x="0" y="7" width="10.5" height="8" fill="#7d8fd0"/><rect x="0" y="13" width="10.5" height="2.5" fill="#54649c"/><rect x="13" y="7.5" width="6.5" height="5" fill="#8d9dd6"/></svg>
<div style="left:1143.2px;top:146px;width:40px;height:24px;overflow:hidden;">
<span style="left:0.0px;top:1.0px;font-size:15.52px;line-height:22px;color:#ececec;text-shadow:1px 1px 0 rgba(0,0,0,.85);letter-spacing:-.4px;">Event </span>
</div>
<svg style="left:1189.9px;top:154.0px" width="8.2" height="8.2" viewBox="0 0 8.2 8.2"><path d="M.6 .6L7.6 7.6M7.6 .6L.6 7.6" stroke="#4f5d6c" stroke-width="1.8" fill="none"/></svg>
<svg style="left:1221.1px;top:148px" width="16.4" height="20" viewBox="0 0 16 21" preserveAspectRatio="none"><path d="M15.6 2.5 C15.6 1.2 14.5 .4 13.1 .4 C10.7 .4 9.5 2.2 8.8 5 L8.4 6.5 H5.9 L5.6 7.9 H8.1 L6 16.4 C5.5 18.4 4.8 19.6 3.7 19.6 C3.2 19.6 3 19.4 3 19.2 C3 18.9 3.3 18.7 3.3 18.1 C3.3 17.4 2.7 16.9 1.9 16.9 C1.1 16.9 .5 17.6 .5 18.5 C.5 19.8 1.8 20.6 3.6 20.6 C6.4 20.6 8.2 18.4 9.1 15 L10.9 7.9 H13.5 L13.8 6.5 H11.2 L11.5 5.3 C12 3.1 12.4 1.4 13.3 1.4 C13.7 1.4 13.8 1.6 13.8 1.8 C13.8 2.1 13.5 2.4 13.5 2.9 C13.5 3.6 14 4.1 14.6 4.1 C15.3 4.1 15.6 3.4 15.6 2.5z" fill="#0a1020" transform="translate(1.2,1)"/><path d="M15.6 2.5 C15.6 1.2 14.5 .4 13.1 .4 C10.7 .4 9.5 2.2 8.8 5 L8.4 6.5 H5.9 L5.6 7.9 H8.1 L6 16.4 C5.5 18.4 4.8 19.6 3.7 19.6 C3.2 19.6 3 19.4 3 19.2 C3 18.9 3.3 18.7 3.3 18.1 C3.3 17.4 2.7 16.9 1.9 16.9 C1.1 16.9 .5 17.6 .5 18.5 C.5 19.8 1.8 20.6 3.6 20.6 C6.4 20.6 8.2 18.4 9.1 15 L10.9 7.9 H13.5 L13.8 6.5 H11.2 L11.5 5.3 C12 3.1 12.4 1.4 13.3 1.4 C13.7 1.4 13.8 1.6 13.8 1.8 C13.8 2.1 13.5 2.4 13.5 2.9 C13.5 3.6 14 4.1 14.6 4.1 C15.3 4.1 15.6 3.4 15.6 2.5z" fill="url(#fgm)" stroke="url(#fgm)" stroke-width="1.0" stroke-linejoin="round"/></svg>
<div style="left:1247.1px;top:146px;width:40px;height:24px;overflow:hidden;">
<span style="left:0.0px;top:1.0px;font-size:15.52px;line-height:22px;color:#ececec;text-shadow:1px 1px 0 rgba(0,0,0,.85);letter-spacing:-.4px;">Push </span>
</div>
<svg style="left:1293.5px;top:154.0px" width="8.2" height="8.2" viewBox="0 0 8.2 8.2"><path d="M.6 .6L7.6 7.6M7.6 .6L.6 7.6" stroke="#4f5d6c" stroke-width="1.8" fill="none"/></svg>
<svg style="left:1324.7px;top:148px" width="16.4" height="20" viewBox="0 0 16 21" preserveAspectRatio="none"><path d="M15.6 2.5 C15.6 1.2 14.5 .4 13.1 .4 C10.7 .4 9.5 2.2 8.8 5 L8.4 6.5 H5.9 L5.6 7.9 H8.1 L6 16.4 C5.5 18.4 4.8 19.6 3.7 19.6 C3.2 19.6 3 19.4 3 19.2 C3 18.9 3.3 18.7 3.3 18.1 C3.3 17.4 2.7 16.9 1.9 16.9 C1.1 16.9 .5 17.6 .5 18.5 C.5 19.8 1.8 20.6 3.6 20.6 C6.4 20.6 8.2 18.4 9.1 15 L10.9 7.9 H13.5 L13.8 6.5 H11.2 L11.5 5.3 C12 3.1 12.4 1.4 13.3 1.4 C13.7 1.4 13.8 1.6 13.8 1.8 C13.8 2.1 13.5 2.4 13.5 2.9 C13.5 3.6 14 4.1 14.6 4.1 C15.3 4.1 15.6 3.4 15.6 2.5z" fill="#0a1020" transform="translate(1.2,1)"/><path d="M15.6 2.5 C15.6 1.2 14.5 .4 13.1 .4 C10.7 .4 9.5 2.2 8.8 5 L8.4 6.5 H5.9 L5.6 7.9 H8.1 L6 16.4 C5.5 18.4 4.8 19.6 3.7 19.6 C3.2 19.6 3 19.4 3 19.2 C3 18.9 3.3 18.7 3.3 18.1 C3.3 17.4 2.7 16.9 1.9 16.9 C1.1 16.9 .5 17.6 .5 18.5 C.5 19.8 1.8 20.6 3.6 20.6 C6.4 20.6 8.2 18.4 9.1 15 L10.9 7.9 H13.5 L13.8 6.5 H11.2 L11.5 5.3 C12 3.1 12.4 1.4 13.3 1.4 C13.7 1.4 13.8 1.6 13.8 1.8 C13.8 2.1 13.5 2.4 13.5 2.9 C13.5 3.6 14 4.1 14.6 4.1 C15.3 4.1 15.6 3.4 15.6 2.5z" fill="url(#fgm)" stroke="url(#fgm)" stroke-width="1.0" stroke-linejoin="round"/></svg>
<div style="left:1350.7px;top:146px;width:40px;height:24px;overflow:hidden;">
<span style="left:0.0px;top:1.0px;font-size:15.52px;line-height:22px;color:#ececec;text-shadow:1px 1px 0 rgba(0,0,0,.85);letter-spacing:-.4px;">Set In</span>
</div>
<svg style="left:1397.1px;top:154.0px" width="8.2" height="8.2" viewBox="0 0 8.2 8.2"><path d="M.6 .6L7.6 7.6M7.6 .6L.6 7.6" stroke="#4f5d6c" stroke-width="1.8" fill="none"/></svg>
<svg style="left:1428.3px;top:148px" width="16.4" height="20" viewBox="0 0 16 21" preserveAspectRatio="none"><path d="M15.6 2.5 C15.6 1.2 14.5 .4 13.1 .4 C10.7 .4 9.5 2.2 8.8 5 L8.4 6.5 H5.9 L5.6 7.9 H8.1 L6 16.4 C5.5 18.4 4.8 19.6 3.7 19.6 C3.2 19.6 3 19.4 3 19.2 C3 18.9 3.3 18.7 3.3 18.1 C3.3 17.4 2.7 16.9 1.9 16.9 C1.1 16.9 .5 17.6 .5 18.5 C.5 19.8 1.8 20.6 3.6 20.6 C6.4 20.6 8.2 18.4 9.1 15 L10.9 7.9 H13.5 L13.8 6.5 H11.2 L11.5 5.3 C12 3.1 12.4 1.4 13.3 1.4 C13.7 1.4 13.8 1.6 13.8 1.8 C13.8 2.1 13.5 2.4 13.5 2.9 C13.5 3.6 14 4.1 14.6 4.1 C15.3 4.1 15.6 3.4 15.6 2.5z" fill="#0a1020" transform="translate(1.2,1)"/><path d="M15.6 2.5 C15.6 1.2 14.5 .4 13.1 .4 C10.7 .4 9.5 2.2 8.8 5 L8.4 6.5 H5.9 L5.6 7.9 H8.1 L6 16.4 C5.5 18.4 4.8 19.6 3.7 19.6 C3.2 19.6 3 19.4 3 19.2 C3 18.9 3.3 18.7 3.3 18.1 C3.3 17.4 2.7 16.9 1.9 16.9 C1.1 16.9 .5 17.6 .5 18.5 C.5 19.8 1.8 20.6 3.6 20.6 C6.4 20.6 8.2 18.4 9.1 15 L10.9 7.9 H13.5 L13.8 6.5 H11.2 L11.5 5.3 C12 3.1 12.4 1.4 13.3 1.4 C13.7 1.4 13.8 1.6 13.8 1.8 C13.8 2.1 13.5 2.4 13.5 2.9 C13.5 3.6 14 4.1 14.6 4.1 C15.3 4.1 15.6 3.4 15.6 2.5z" fill="url(#fgm)" stroke="url(#fgm)" stroke-width="1.0" stroke-linejoin="round"/></svg>
<div style="left:1454.3px;top:146px;width:40px;height:24px;overflow:hidden;">
<span style="left:0.0px;top:1.0px;font-size:15.52px;line-height:22px;color:#ececec;text-shadow:1px 1px 0 rgba(0,0,0,.85);letter-spacing:-.85px;">Get DM</span>
</div>
<svg style="left:1500.7px;top:154.0px" width="8.2" height="8.2" viewBox="0 0 8.2 8.2"><path d="M.6 .6L7.6 7.6M7.6 .6L.6 7.6" stroke="#4f5d6c" stroke-width="1.8" fill="none"/></svg>
<svg style="left:1531.9px;top:148px" width="16.4" height="20" viewBox="0 0 16 21" preserveAspectRatio="none"><path d="M15.6 2.5 C15.6 1.2 14.5 .4 13.1 .4 C10.7 .4 9.5 2.2 8.8 5 L8.4 6.5 H5.9 L5.6 7.9 H8.1 L6 16.4 C5.5 18.4 4.8 19.6 3.7 19.6 C3.2 19.6 3 19.4 3 19.2 C3 18.9 3.3 18.7 3.3 18.1 C3.3 17.4 2.7 16.9 1.9 16.9 C1.1 16.9 .5 17.6 .5 18.5 C.5 19.8 1.8 20.6 3.6 20.6 C6.4 20.6 8.2 18.4 9.1 15 L10.9 7.9 H13.5 L13.8 6.5 H11.2 L11.5 5.3 C12 3.1 12.4 1.4 13.3 1.4 C13.7 1.4 13.8 1.6 13.8 1.8 C13.8 2.1 13.5 2.4 13.5 2.9 C13.5 3.6 14 4.1 14.6 4.1 C15.3 4.1 15.6 3.4 15.6 2.5z" fill="#0a1020" transform="translate(1.2,1)"/><path d="M15.6 2.5 C15.6 1.2 14.5 .4 13.1 .4 C10.7 .4 9.5 2.2 8.8 5 L8.4 6.5 H5.9 L5.6 7.9 H8.1 L6 16.4 C5.5 18.4 4.8 19.6 3.7 19.6 C3.2 19.6 3 19.4 3 19.2 C3 18.9 3.3 18.7 3.3 18.1 C3.3 17.4 2.7 16.9 1.9 16.9 C1.1 16.9 .5 17.6 .5 18.5 C.5 19.8 1.8 20.6 3.6 20.6 C6.4 20.6 8.2 18.4 9.1 15 L10.9 7.9 H13.5 L13.8 6.5 H11.2 L11.5 5.3 C12 3.1 12.4 1.4 13.3 1.4 C13.7 1.4 13.8 1.6 13.8 1.8 C13.8 2.1 13.5 2.4 13.5 2.9 C13.5 3.6 14 4.1 14.6 4.1 C15.3 4.1 15.6 3.4 15.6 2.5z" fill="url(#fgm)" stroke="url(#fgm)" stroke-width="1.0" stroke-linejoin="round"/></svg>
<div style="left:1557.9px;top:146px;width:40px;height:24px;overflow:hidden;">
<span style="left:0.0px;top:1.0px;font-size:15.52px;line-height:22px;color:#ececec;text-shadow:1px 1px 0 rgba(0,0,0,.85);letter-spacing:-.4px;">Set Co</span>
</div>
<svg style="left:1604.3px;top:154.0px" width="8.2" height="8.2" viewBox="0 0 8.2 8.2"><path d="M.6 .6L7.6 7.6M7.6 .6L.6 7.6" stroke="#4f5d6c" stroke-width="1.8" fill="none"/></svg>
<svg style="left:1635.5px;top:148px" width="16.4" height="20" viewBox="0 0 16 21" preserveAspectRatio="none"><path d="M15.6 2.5 C15.6 1.2 14.5 .4 13.1 .4 C10.7 .4 9.5 2.2 8.8 5 L8.4 6.5 H5.9 L5.6 7.9 H8.1 L6 16.4 C5.5 18.4 4.8 19.6 3.7 19.6 C3.2 19.6 3 19.4 3 19.2 C3 18.9 3.3 18.7 3.3 18.1 C3.3 17.4 2.7 16.9 1.9 16.9 C1.1 16.9 .5 17.6 .5 18.5 C.5 19.8 1.8 20.6 3.6 20.6 C6.4 20.6 8.2 18.4 9.1 15 L10.9 7.9 H13.5 L13.8 6.5 H11.2 L11.5 5.3 C12 3.1 12.4 1.4 13.3 1.4 C13.7 1.4 13.8 1.6 13.8 1.8 C13.8 2.1 13.5 2.4 13.5 2.9 C13.5 3.6 14 4.1 14.6 4.1 C15.3 4.1 15.6 3.4 15.6 2.5z" fill="#0a1020" transform="translate(1.2,1)"/><path d="M15.6 2.5 C15.6 1.2 14.5 .4 13.1 .4 C10.7 .4 9.5 2.2 8.8 5 L8.4 6.5 H5.9 L5.6 7.9 H8.1 L6 16.4 C5.5 18.4 4.8 19.6 3.7 19.6 C3.2 19.6 3 19.4 3 19.2 C3 18.9 3.3 18.7 3.3 18.1 C3.3 17.4 2.7 16.9 1.9 16.9 C1.1 16.9 .5 17.6 .5 18.5 C.5 19.8 1.8 20.6 3.6 20.6 C6.4 20.6 8.2 18.4 9.1 15 L10.9 7.9 H13.5 L13.8 6.5 H11.2 L11.5 5.3 C12 3.1 12.4 1.4 13.3 1.4 C13.7 1.4 13.8 1.6 13.8 1.8 C13.8 2.1 13.5 2.4 13.5 2.9 C13.5 3.6 14 4.1 14.6 4.1 C15.3 4.1 15.6 3.4 15.6 2.5z" fill="url(#fgm)" stroke="url(#fgm)" stroke-width="1.0" stroke-linejoin="round"/></svg>
<div style="left:1661.5px;top:146px;width:40px;height:24px;overflow:hidden;">
<span style="left:0.0px;top:1.0px;font-size:15.52px;line-height:22px;color:#ececec;text-shadow:1px 1px 0 rgba(0,0,0,.85);letter-spacing:-.4px;">Create</span>
</div>
<svg style="left:1707.9px;top:154.0px" width="8.2" height="8.2" viewBox="0 0 8.2 8.2"><path d="M.6 .6L7.6 7.6M7.6 .6L.6 7.6" stroke="#4f5d6c" stroke-width="1.8" fill="none"/></svg>
<svg style="left:1739.1px;top:148px" width="16.4" height="20" viewBox="0 0 16 21" preserveAspectRatio="none"><path d="M15.6 2.5 C15.6 1.2 14.5 .4 13.1 .4 C10.7 .4 9.5 2.2 8.8 5 L8.4 6.5 H5.9 L5.6 7.9 H8.1 L6 16.4 C5.5 18.4 4.8 19.6 3.7 19.6 C3.2 19.6 3 19.4 3 19.2 C3 18.9 3.3 18.7 3.3 18.1 C3.3 17.4 2.7 16.9 1.9 16.9 C1.1 16.9 .5 17.6 .5 18.5 C.5 19.8 1.8 20.6 3.6 20.6 C6.4 20.6 8.2 18.4 9.1 15 L10.9 7.9 H13.5 L13.8 6.5 H11.2 L11.5 5.3 C12 3.1 12.4 1.4 13.3 1.4 C13.7 1.4 13.8 1.6 13.8 1.8 C13.8 2.1 13.5 2.4 13.5 2.9 C13.5 3.6 14 4.1 14.6 4.1 C15.3 4.1 15.6 3.4 15.6 2.5z" fill="#0a1020" transform="translate(1.2,1)"/><path d="M15.6 2.5 C15.6 1.2 14.5 .4 13.1 .4 C10.7 .4 9.5 2.2 8.8 5 L8.4 6.5 H5.9 L5.6 7.9 H8.1 L6 16.4 C5.5 18.4 4.8 19.6 3.7 19.6 C3.2 19.6 3 19.4 3 19.2 C3 18.9 3.3 18.7 3.3 18.1 C3.3 17.4 2.7 16.9 1.9 16.9 C1.1 16.9 .5 17.6 .5 18.5 C.5 19.8 1.8 20.6 3.6 20.6 C6.4 20.6 8.2 18.4 9.1 15 L10.9 7.9 H13.5 L13.8 6.5 H11.2 L11.5 5.3 C12 3.1 12.4 1.4 13.3 1.4 C13.7 1.4 13.8 1.6 13.8 1.8 C13.8 2.1 13.5 2.4 13.5 2.9 C13.5 3.6 14 4.1 14.6 4.1 C15.3 4.1 15.6 3.4 15.6 2.5z" fill="url(#fgm)" stroke="url(#fgm)" stroke-width="1.0" stroke-linejoin="round"/></svg>
<div style="left:1765.1px;top:146px;width:40px;height:24px;overflow:hidden;">
<span style="left:0.0px;top:1.0px;font-size:15.52px;line-height:22px;color:#ececec;text-shadow:1px 1px 0 rgba(0,0,0,.85);letter-spacing:-.85px;">Get Go</span>
</div>
<svg style="left:1811.5px;top:154.0px" width="8.2" height="8.2" viewBox="0 0 8.2 8.2"><path d="M.6 .6L7.6 7.6M7.6 .6L.6 7.6" stroke="#4f5d6c" stroke-width="1.8" fill="none"/></svg>
<div style="left:482px;top:173px;width:1350px;height:1002px;background:#2f3d4d;"></div>
<div style="left:484px;top:175px;width:1344px;height:997px;overflow:hidden;background-color:#262626;">
<div style="left:0;top:0;width:1344px;height:997px;background-image:linear-gradient(90deg,#121212 0,#121212 1px,transparent 1px),linear-gradient(180deg,#121212 0,#121212 1px,transparent 1px),linear-gradient(90deg,#363636 0,#363636 1px,transparent 1px),linear-gradient(90deg,#363636 0,#363636 1px,transparent 1px),linear-gradient(180deg,#363636 0,#363636 1px,transparent 1px),linear-gradient(180deg,#363636 0,#363636 1px,transparent 1px);background-size:108px 108px,108px 108px,27px 27px,27px 27px,27px 27px,27px 27px;background-position:47px 0,0 73px,20px 0,7px 0,0 19px,0 5px;"></div>
<div style="left:0;top:0;width:1344px;height:997px;background:linear-gradient(90deg,rgba(0,0,0,.22) 0,transparent 60px,transparent 1264px,rgba(0,0,0,.3) 1344px),radial-gradient(ellipse at 50% 45%,transparent 55%,rgba(0,0,0,.24) 100%);"></div>
<div style="left:0;top:0;width:1344px;height:52.5px;background:rgba(0,0,0,.55);"></div>
<div style="left:-484px;top:-175px;width:1828px;height:1185px;">
<svg style="left:492.6px;top:187.8px" width="25.6" height="24.6" viewBox="0 0 27 26"><path d="M13.5 2.2 L16.6 10 L25 10.5 L18.5 15.8 L20.7 24 L13.5 19.4 L6.3 24 L8.5 15.8 L2 10.5 L10.4 10z" fill="none" stroke="#dcdcdc" stroke-width="1.7" stroke-linejoin="miter"/></svg>
<div style="left:526px;top:179.5px;width:1.3px;height:44px;background:linear-gradient(transparent,#777 25%,#777 75%,transparent);"></div>
<div style="left:634.7px;top:179.5px;width:1.3px;height:44px;background:linear-gradient(transparent,#777 25%,#777 75%,transparent);"></div>
<svg style="left:540px;top:184px" width="24" height="31" viewBox="0 0 24 31"><defs><linearGradient id="arL" x1="0" y1="0" x2="1" y2="1"><stop offset="0" stop-color="#ffffff"/><stop offset=".6" stop-color="#d4ecf2"/><stop offset="1" stop-color="#a9cfdc"/></linearGradient></defs>
<path d="M6 27.5h17v2.2H8z" fill="#000" opacity=".8"/>
<path d="M1.8 14.8 L12.2 1.3 L12.2 8.2 L22 8.2 L22 21.4 L12.2 21.4 L12.2 28.5z" fill="url(#arL)"/></svg>
<svg style="left:593px;top:184px" width="24" height="31" viewBox="0 0 24 31">
<path d="M3 27.8h15v1.4H3z" fill="#444" opacity=".7"/>
<path d="M23 14.8 L12.6 1.3 L12.6 8.2 L2 8.2 L2 21.4 L12.6 21.4 L12.6 28.5z" fill="#8b8b8b"/></svg>
<svg style="left:651.4px;top:186px" width="24.3" height="30.5" viewBox="0 0 16 21" preserveAspectRatio="none"><path d="M15.6 2.5 C15.6 1.2 14.5 .4 13.1 .4 C10.7 .4 9.5 2.2 8.8 5 L8.4 6.5 H5.9 L5.6 7.9 H8.1 L6 16.4 C5.5 18.4 4.8 19.6 3.7 19.6 C3.2 19.6 3 19.4 3 19.2 C3 18.9 3.3 18.7 3.3 18.1 C3.3 17.4 2.7 16.9 1.9 16.9 C1.1 16.9 .5 17.6 .5 18.5 C.5 19.8 1.8 20.6 3.6 20.6 C6.4 20.6 8.2 18.4 9.1 15 L10.9 7.9 H13.5 L13.8 6.5 H11.2 L11.5 5.3 C12 3.1 12.4 1.4 13.3 1.4 C13.7 1.4 13.8 1.6 13.8 1.8 C13.8 2.1 13.5 2.4 13.5 2.9 C13.5 3.6 14 4.1 14.6 4.1 C15.3 4.1 15.6 3.4 15.6 2.5z" fill="#000" transform="translate(1.2,1)"/><path d="M15.6 2.5 C15.6 1.2 14.5 .4 13.1 .4 C10.7 .4 9.5 2.2 8.8 5 L8.4 6.5 H5.9 L5.6 7.9 H8.1 L6 16.4 C5.5 18.4 4.8 19.6 3.7 19.6 C3.2 19.6 3 19.4 3 19.2 C3 18.9 3.3 18.7 3.3 18.1 C3.3 17.4 2.7 16.9 1.9 16.9 C1.1 16.9 .5 17.6 .5 18.5 C.5 19.8 1.8 20.6 3.6 20.6 C6.4 20.6 8.2 18.4 9.1 15 L10.9 7.9 H13.5 L13.8 6.5 H11.2 L11.5 5.3 C12 3.1 12.4 1.4 13.3 1.4 C13.7 1.4 13.8 1.6 13.8 1.8 C13.8 2.1 13.5 2.4 13.5 2.9 C13.5 3.6 14 4.1 14.6 4.1 C15.3 4.1 15.6 3.4 15.6 2.5z" fill="url(#fgm)" stroke="url(#fgm)" stroke-width="0.7" stroke-linejoin="round"/></svg>
<span style="left:697.6px;top:182.0px;font-size:25.36px;line-height:36px;color:#a6a6a6;letter-spacing:-1.24px;">BP_FixtureLogic</span>
<svg style="left:874px;top:192px" width="14" height="18" viewBox="0 0 14 18"><path d="M2.4 1.3 L11.6 9 L2.4 16.7" fill="none" stroke="#e2e2e2" stroke-width="2.8"/></svg>
<span style="left:898.5px;top:182.0px;font-size:25.36px;line-height:36px;color:#a6a6a6;letter-spacing:-1.37px;">Create Gobo Disk</span>
<span style="left:1741.8px;top:177.0px;font-size:27.43px;line-height:38px;color:#2d2d2d;font-weight:bold;transform:scaleX(0.8119);transform-origin:0 50%;">Zoom -3</span>
<span style="left:1457.2px;top:1053.0px;font-size:81.77px;line-height:114px;color:rgba(255,255,255,.17);font-weight:bold;transform:scaleX(0.7822);transform-origin:0 50%;">BLUEPRINT</span>
<div style="left:663px;top:808.2px;width:230px;height:3px;background:#fff;box-shadow:0 0 2px rgba(255,255,255,.35);"></div>
<div style="left:1155px;top:808.2px;width:105px;height:3px;background:#fff;box-shadow:0 0 2px rgba(255,255,255,.35);"></div>
<div style="left:1382px;top:808.2px;width:227px;height:3px;background:#fff;box-shadow:0 0 2px rgba(255,255,255,.35);"></div>
<div style="left:1154px;top:832px;width:108px;height:1.6px;background:#0a93e6;"></div>
<div style="left:532.5px;top:775.8px;width:140.5px;height:48px;background:linear-gradient(rgba(27,28,27,.93),rgba(15,16,15,.93));border:1px solid #000;border-radius:6px;box-shadow:0 2px 5px rgba(0,0,0,.7);overflow:hidden;"></div>
<div style="left:533.5px;top:776.8px;width:138.5px;height:18.4px;background:linear-gradient(180deg,rgba(255,255,255,.22) 0,rgba(255,255,255,0) 2px),linear-gradient(90deg,#8d1f9b 0,#7a1c87 45%,#4a2a50 80%,#39343a 100%);border-radius:5px 5px 0 0;"></div>
<div style="left:533.5px;top:790px;width:138.5px;height:5.2px;background:linear-gradient(180deg,rgba(15,16,15,0),rgba(15,16,15,.55));"></div>
<svg style="left:541.3px;top:779px" width="12" height="13" viewBox="0 0 12 13"><rect width="12" height="13" fill="#cfc6a8"/><rect width="12" height="4.4" fill="#e6ecdf"/><rect y="4.4" width="12" height="1" fill="#8f8a6e"/></svg>
<span style="left:557.1px;top:778.0px;font-size:10.87px;line-height:15px;color:#fff;font-weight:bold;letter-spacing:-0.34px;text-shadow:1px 1px 0 rgba(0,0,0,.8);">Create Gobo Disk</span>
<svg style="left:652.8px;top:803.6px" width="10.6" height="12.4" viewBox="0 0 11 13"><path d="M.8 .6 H4.6 Q5.4 .6 6 1.2 L10.4 5.8 Q11 6.5 10.4 7.2 L6 11.8 Q5.4 12.4 4.6 12.4 H.8 Q.2 12.4 .2 11.8 V1.2 Q.2 .6 .8 .6z" fill="#fff"/></svg>
<div style="left:884.4px;top:775.8px;width:280.4px;height:204.2px;background:linear-gradient(rgba(27,28,27,.93) 0,rgba(16,17,16,.93) 60%,rgba(14,15,14,.93) 100%);border:1px solid #000;border-radius:6px;box-shadow:0 2px 6px rgba(0,0,0,.7);"></div>
<div style="left:885.4px;top:776.8px;width:278.4px;height:18.4px;background:linear-gradient(180deg,rgba(255,255,255,.35) 0,rgba(255,255,255,0) 2px),linear-gradient(90deg,#4c88b2 0,#3d7198 35%,#27475f 75%,#1d3344 100%);border-radius:5px 5px 0 0;"></div>
<div style="left:885.4px;top:789px;width:278.4px;height:6.2px;background:linear-gradient(180deg,rgba(15,16,15,0),rgba(15,16,15,.5));"></div>
<svg style="left:894.0px;top:779px" width="11.2" height="15.2" viewBox="0 0 16 21" preserveAspectRatio="none"><path d="M15.6 2.5 C15.6 1.2 14.5 .4 13.1 .4 C10.7 .4 9.5 2.2 8.8 5 L8.4 6.5 H5.9 L5.6 7.9 H8.1 L6 16.4 C5.5 18.4 4.8 19.6 3.7 19.6 C3.2 19.6 3 19.4 3 19.2 C3 18.9 3.3 18.7 3.3 18.1 C3.3 17.4 2.7 16.9 1.9 16.9 C1.1 16.9 .5 17.6 .5 18.5 C.5 19.8 1.8 20.6 3.6 20.6 C6.4 20.6 8.2 18.4 9.1 15 L10.9 7.9 H13.5 L13.8 6.5 H11.2 L11.5 5.3 C12 3.1 12.4 1.4 13.3 1.4 C13.7 1.4 13.8 1.6 13.8 1.8 C13.8 2.1 13.5 2.4 13.5 2.9 C13.5 3.6 14 4.1 14.6 4.1 C15.3 4.1 15.6 3.4 15.6 2.5z" fill="#58b6f0" stroke="#58b6f0" stroke-width="0" stroke-linejoin="round"/></svg>
<span style="left:908.3px;top:778.0px;font-size:10.87px;line-height:15px;color:#fff;font-weight:bold;letter-spacing:-0.22px;text-shadow:1px 1px 0 rgba(0,0,0,.8);">Create Render Target 2D</span>
<svg style="left:892.6px;top:803.6px" width="10.6" height="12.4" viewBox="0 0 11 13"><path d="M.8 .6 H4.6 Q5.4 .6 6 1.2 L10.4 5.8 Q11 6.5 10.4 7.2 L6 11.8 Q5.4 12.4 4.6 12.4 H.8 Q.2 12.4 .2 11.8 V1.2 Q.2 .6 .8 .6z" fill="#fff"/></svg>
<svg style="left:1143.8px;top:803.6px" width="10.6" height="12.4" viewBox="0 0 11 13"><path d="M.8 .6 H4.6 Q5.4 .6 6 1.2 L10.4 5.8 Q11 6.5 10.4 7.2 L6 11.8 Q5.4 12.4 4.6 12.4 H.8 Q.2 12.4 .2 11.8 V1.2 Q.2 .6 .8 .6z" fill="#fff"/></svg>
<svg style="left:892.6px;top:828.1px" width="15" height="12" viewBox="0 0 15 12"><path d="M10.2 3.4 L13.6 6 L10.2 8.6z" fill="#1fd39c"/><circle cx="5.6" cy="6" r="4.3" fill="#0c0c0c" stroke="#1fd39c" stroke-width="1.7"/></svg>
<span style="left:910.1px;top:827.0px;font-size:10.87px;line-height:15px;color:#f2f2f2;letter-spacing:-0.30px;text-shadow:1px 1px 0 rgba(0,0,0,.8);">Width</span>
<div style="left:941.2px;top:827px;width:33px;height:15px;background:transparent;border:1px solid #bdbdbd;border-radius:2px;"></div>
<span style="left:946.1px;top:827.0px;font-size:10.87px;line-height:15px;color:#cfcfcf;letter-spacing:-0.20px;text-shadow:1px 1px 0 rgba(0,0,0,.8);">4096</span>
<span style="left:1080.3px;top:826.0px;font-size:10.87px;line-height:15px;color:#f2f2f2;letter-spacing:-0.40px;text-shadow:1px 1px 0 rgba(0,0,0,.8);">Return Value</span>
<svg style="left:1141.7px;top:826.8px" width="15" height="12" viewBox="0 0 15 12"><path d="M10.2 3.4 L13.6 6 L10.2 8.6z" fill="#0a9ff0"/><circle cx="5.6" cy="6" r="5.2" fill="#0a9ff0" stroke="#0a9ff0" stroke-width="0"/></svg>
<svg style="left:892.6px;top:854.0px" width="15" height="12" viewBox="0 0 15 12"><path d="M10.2 3.4 L13.6 6 L10.2 8.6z" fill="#1fd39c"/><circle cx="5.6" cy="6" r="4.3" fill="#0c0c0c" stroke="#1fd39c" stroke-width="1.7"/></svg>
<span style="left:910.1px;top:853.0px;font-size:10.87px;line-height:15px;color:#f2f2f2;letter-spacing:-0.25px;text-shadow:1px 1px 0 rgba(0,0,0,.8);">Height</span>
<div style="left:944.1px;top:852.3px;width:27px;height:15.5px;background:transparent;border:1px solid #bdbdbd;border-radius:2px;"></div>
<span style="left:949.4px;top:853.0px;font-size:10.87px;line-height:15px;color:#cfcfcf;letter-spacing:-0.41px;text-shadow:1px 1px 0 rgba(0,0,0,.8);">256</span>
<span style="left:910.1px;top:877.0px;font-size:10.87px;line-height:15px;color:#f2f2f2;letter-spacing:-0.07px;text-shadow:1px 1px 0 rgba(0,0,0,.8);">Format</span>
<svg style="left:892.6px;top:887.4px" width="15" height="12" viewBox="0 0 15 12"><path d="M10.2 3.4 L13.6 6 L10.2 8.6z" fill="#0d7d78"/><circle cx="5.6" cy="6" r="4.3" fill="#0c0c0c" stroke="#0d7d78" stroke-width="1.7"/></svg>
<div style="left:913.7px;top:889.8px;width:145.6px;height:19.4px;background:linear-gradient(#fff,#e6e6e6);border-radius:1px;"></div>
<span style="left:919.2px;top:893.0px;font-size:9.94px;line-height:14px;color:#000;letter-spacing:-0.99px;">RTF R8</span>
<svg style="left:1046.6px;top:897.8px" width="8" height="4" viewBox="0 0 8 4"><path d="M0 0H8L4 4z" fill="#111"/></svg>
<svg style="left:892.6px;top:920.7px" width="15" height="12" viewBox="0 0 15 12"><path d="M10.2 3.4 L13.6 6 L10.2 8.6z" fill="#0b5fd2"/><circle cx="5.6" cy="6" r="4.3" fill="#0c0c0c" stroke="#0b5fd2" stroke-width="1.7"/></svg>
<span style="left:910.1px;top:920.0px;font-size:10.87px;line-height:15px;color:#f2f2f2;letter-spacing:-0.46px;text-shadow:1px 1px 0 rgba(0,0,0,.8);">Clear Color</span>
<div style="left:965px;top:919.3px;width:16px;height:14.6px;background:#000;border:1px solid #4a4a4a;"></div>
<span style="left:910.1px;top:944.0px;font-size:10.87px;line-height:15px;color:#f2f2f2;letter-spacing:-0.40px;text-shadow:1px 1px 0 rgba(0,0,0,.8);">Auto Generate Mip Maps</span>
<svg style="left:892.6px;top:953.1px" width="15" height="12" viewBox="0 0 15 12"><path d="M10.2 3.4 L13.6 6 L10.2 8.6z" fill="#8c0b0b"/><circle cx="5.6" cy="6" r="4.3" fill="#0c0c0c" stroke="#8c0b0b" stroke-width="1.7"/></svg>
<div style="left:915.8px;top:958.6px;width:13.6px;height:12.6px;background:#3a3a3a;border:1.6px solid #dcdcdc;border-radius:3.5px;"></div>
<div style="left:1600.0px;top:775.8px;width:280.4px;height:204.2px;background:linear-gradient(rgba(27,28,27,.93) 0,rgba(16,17,16,.93) 60%,rgba(14,15,14,.93) 100%);border:1px solid #000;border-radius:6px;box-shadow:0 2px 6px rgba(0,0,0,.7);"></div>
<div style="left:1601.0px;top:776.8px;width:278.4px;height:18.4px;background:linear-gradient(180deg,rgba(255,255,255,.35) 0,rgba(255,255,255,0) 2px),linear-gradient(90deg,#4c88b2 0,#3d7198 35%,#27475f 75%,#1d3344 100%);border-radius:5px 5px 0 0;"></div>
<div style="left:1601.0px;top:789px;width:278.4px;height:6.2px;background:linear-gradient(180deg,rgba(15,16,15,0),rgba(15,16,15,.5));"></div>
<svg style="left:1609.6px;top:779px" width="11.2" height="15.2" viewBox="0 0 16 21" preserveAspectRatio="none"><path d="M15.6 2.5 C15.6 1.2 14.5 .4 13.1 .4 C10.7 .4 9.5 2.2 8.8 5 L8.4 6.5 H5.9 L5.6 7.9 H8.1 L6 16.4 C5.5 18.4 4.8 19.6 3.7 19.6 C3.2 19.6 3 19.4 3 19.2 C3 18.9 3.3 18.7 3.3 18.1 C3.3 17.4 2.7 16.9 1.9 16.9 C1.1 16.9 .5 17.6 .5 18.5 C.5 19.8 1.8 20.6 3.6 20.6 C6.4 20.6 8.2 18.4 9.1 15 L10.9 7.9 H13.5 L13.8 6.5 H11.2 L11.5 5.3 C12 3.1 12.4 1.4 13.3 1.4 C13.7 1.4 13.8 1.6 13.8 1.8 C13.8 2.1 13.5 2.4 13.5 2.9 C13.5 3.6 14 4.1 14.6 4.1 C15.3 4.1 15.6 3.4 15.6 2.5z" fill="#58b6f0" stroke="#58b6f0" stroke-width="0" stroke-linejoin="round"/></svg>
<span style="left:1623.9px;top:778.0px;font-size:10.87px;line-height:15px;color:#fff;font-weight:bold;letter-spacing:-0.22px;text-shadow:1px 1px 0 rgba(0,0,0,.8);">Create Render Target 2D</span>
<svg style="left:1608.2px;top:803.6px" width="10.6" height="12.4" viewBox="0 0 11 13"><path d="M.8 .6 H4.6 Q5.4 .6 6 1.2 L10.4 5.8 Q11 6.5 10.4 7.2 L6 11.8 Q5.4 12.4 4.6 12.4 H.8 Q.2 12.4 .2 11.8 V1.2 Q.2 .6 .8 .6z" fill="#fff"/></svg>
<svg style="left:1859.4px;top:803.6px" width="10.6" height="12.4" viewBox="0 0 11 13"><path d="M.8 .6 H4.6 Q5.4 .6 6 1.2 L10.4 5.8 Q11 6.5 10.4 7.2 L6 11.8 Q5.4 12.4 4.6 12.4 H.8 Q.2 12.4 .2 11.8 V1.2 Q.2 .6 .8 .6z" fill="#fff"/></svg>
<svg style="left:1608.2px;top:828.1px" width="15" height="12" viewBox="0 0 15 12"><path d="M10.2 3.4 L13.6 6 L10.2 8.6z" fill="#1fd39c"/><circle cx="5.6" cy="6" r="4.3" fill="#0c0c0c" stroke="#1fd39c" stroke-width="1.7"/></svg>
<span style="left:1625.7px;top:827.0px;font-size:10.87px;line-height:15px;color:#f2f2f2;letter-spacing:-0.30px;text-shadow:1px 1px 0 rgba(0,0,0,.8);">Width</span>
<div style="left:1656.8000000000002px;top:827px;width:33px;height:15px;background:transparent;border:1px solid #bdbdbd;border-radius:2px;"></div>
<span style="left:1661.7px;top:827.0px;font-size:10.87px;line-height:15px;color:#cfcfcf;letter-spacing:-0.20px;text-shadow:1px 1px 0 rgba(0,0,0,.8);">4096</span>
<span style="left:1795.9px;top:826.0px;font-size:10.87px;line-height:15px;color:#f2f2f2;letter-spacing:-0.40px;text-shadow:1px 1px 0 rgba(0,0,0,.8);">Return Value</span>
<svg style="left:1857.3000000000002px;top:826.8px" width="15" height="12" viewBox="0 0 15 12"><path d="M10.2 3.4 L13.6 6 L10.2 8.6z" fill="#0a9ff0"/><circle cx="5.6" cy="6" r="5.2" fill="#0a9ff0" stroke="#0a9ff0" stroke-width="0"/></svg>
<svg style="left:1608.2px;top:854.0px" width="15" height="12" viewBox="0 0 15 12"><path d="M10.2 3.4 L13.6 6 L10.2 8.6z" fill="#1fd39c"/><circle cx="5.6" cy="6" r="4.3" fill="#0c0c0c" stroke="#1fd39c" stroke-width="1.7"/></svg>
<span style="left:1625.7px;top:853.0px;font-size:10.87px;line-height:15px;color:#f2f2f2;letter-spacing:-0.25px;text-shadow:1px 1px 0 rgba(0,0,0,.8);">Height</span>
<div style="left:1659.7px;top:852.3px;width:27px;height:15.5px;background:transparent;border:1px solid #bdbdbd;border-radius:2px;"></div>
<span style="left:1665.0px;top:853.0px;font-size:10.87px;line-height:15px;color:#cfcfcf;letter-spacing:-0.41px;text-shadow:1px 1px 0 rgba(0,0,0,.8);">256</span>
<span style="left:1625.7px;top:877.0px;font-size:10.87px;line-height:15px;color:#f2f2f2;letter-spacing:-0.07px;text-shadow:1px 1px 0 rgba(0,0,0,.8);">Format</span>
<svg style="left:1608.2px;top:887.4px" width="15" height="12" viewBox="0 0 15 12"><path d="M10.2 3.4 L13.6 6 L10.2 8.6z" fill="#0d7d78"/><circle cx="5.6" cy="6" r="4.3" fill="#0c0c0c" stroke="#0d7d78" stroke-width="1.7"/></svg>
<div style="left:1629.3000000000002px;top:889.8px;width:145.6px;height:19.4px;background:linear-gradient(#fff,#e6e6e6);border-radius:1px;"></div>
<span style="left:1634.8px;top:893.0px;font-size:9.94px;line-height:14px;color:#000;letter-spacing:-0.99px;">RTF R8</span>
<svg style="left:1762.2px;top:897.8px" width="8" height="4" viewBox="0 0 8 4"><path d="M0 0H8L4 4z" fill="#111"/></svg>
<svg style="left:1608.2px;top:920.7px" width="15" height="12" viewBox="0 0 15 12"><path d="M10.2 3.4 L13.6 6 L10.2 8.6z" fill="#0b5fd2"/><circle cx="5.6" cy="6" r="4.3" fill="#0c0c0c" stroke="#0b5fd2" stroke-width="1.7"/></svg>
<span style="left:1625.7px;top:920.0px;font-size:10.87px;line-height:15px;color:#f2f2f2;letter-spacing:-0.46px;text-shadow:1px 1px 0 rgba(0,0,0,.8);">Clear Color</span>
<div style="left:1680.6px;top:919.3px;width:16px;height:14.6px;background:#000;border:1px solid #4a4a4a;"></div>
<span style="left:1625.7px;top:944.0px;font-size:10.87px;line-height:15px;color:#f2f2f2;letter-spacing:-0.40px;text-shadow:1px 1px 0 rgba(0,0,0,.8);">Auto Generate Mip Maps</span>
<svg style="left:1608.2px;top:953.1px" width="15" height="12" viewBox="0 0 15 12"><path d="M10.2 3.4 L13.6 6 L10.2 8.6z" fill="#8c0b0b"/><circle cx="5.6" cy="6" r="4.3" fill="#0c0c0c" stroke="#8c0b0b" stroke-width="1.7"/></svg>
<div style="left:1631.4px;top:958.6px;width:13.6px;height:12.6px;background:#3a3a3a;border:1.6px solid #dcdcdc;border-radius:3.5px;"></div>
<div style="left:1248.8px;top:789.8px;width:145.2px;height:55.6px;background:rgba(20,20,20,.72);border:1px solid #050505;border-radius:9px;box-shadow:0 2px 6px rgba(0,0,0,.6);overflow:hidden;"></div>
<div style="left:1249.8px;top:790.8px;width:143.2px;height:24px;background:radial-gradient(ellipse 60% 100% at 50% 0,rgba(72,160,210,.8) 0,rgba(50,120,165,.42) 45%,rgba(30,70,100,0) 100%);border-radius:8px 8px 0 0;"></div>
<div style="left:1249.8px;top:790.8px;width:143.2px;height:9px;background:linear-gradient(180deg,rgba(255,255,255,.16),rgba(255,255,255,0));border-radius:8px 8px 0 0;"></div>
<span style="left:1312.6px;top:794.0px;font-size:10.87px;line-height:15px;color:#f2f2f2;font-weight:bold;letter-spacing:-1.15px;text-shadow:1px 1px 0 rgba(0,0,0,.8);">SET</span>
<svg style="left:1259.2px;top:803.6px" width="10.6" height="12.4" viewBox="0 0 11 13"><path d="M.8 .6 H4.6 Q5.4 .6 6 1.2 L10.4 5.8 Q11 6.5 10.4 7.2 L6 11.8 Q5.4 12.4 4.6 12.4 H.8 Q.2 12.4 .2 11.8 V1.2 Q.2 .6 .8 .6z" fill="#fff"/></svg>
<svg style="left:1372.6px;top:803.6px" width="10.6" height="12.4" viewBox="0 0 11 13"><path d="M.8 .6 H4.6 Q5.4 .6 6 1.2 L10.4 5.8 Q11 6.5 10.4 7.2 L6 11.8 Q5.4 12.4 4.6 12.4 H.8 Q.2 12.4 .2 11.8 V1.2 Q.2 .6 .8 .6z" fill="#fff"/></svg>
<svg style="left:1258.6px;top:826.6px" width="15" height="12" viewBox="0 0 15 12"><path d="M10.2 3.4 L13.6 6 L10.2 8.6z" fill="#0a9ff0"/><circle cx="5.6" cy="6" r="5.2" fill="#0a9ff0" stroke="#0a9ff0" stroke-width="0"/></svg>
<span style="left:1276.6px;top:826.0px;font-size:10.87px;line-height:15px;color:#f2f2f2;letter-spacing:-0.74px;text-shadow:1px 1px 0 rgba(0,0,0,.8);">Disk Clean RT</span>
<svg style="left:1369.2px;top:826.6px" width="15" height="12" viewBox="0 0 15 12"><path d="M10.2 3.4 L13.6 6 L10.2 8.6z" fill="#0a93e6"/><circle cx="5.6" cy="6" r="4.3" fill="#0c0c0c" stroke="#0a93e6" stroke-width="1.7"/></svg>
</div>
</div>
<div style="left:676px;top:1181px;width:187px;height:6px;background:#2c3a49;border-radius:2px 2px 0 0;"></div>
</div>
</body></html>
